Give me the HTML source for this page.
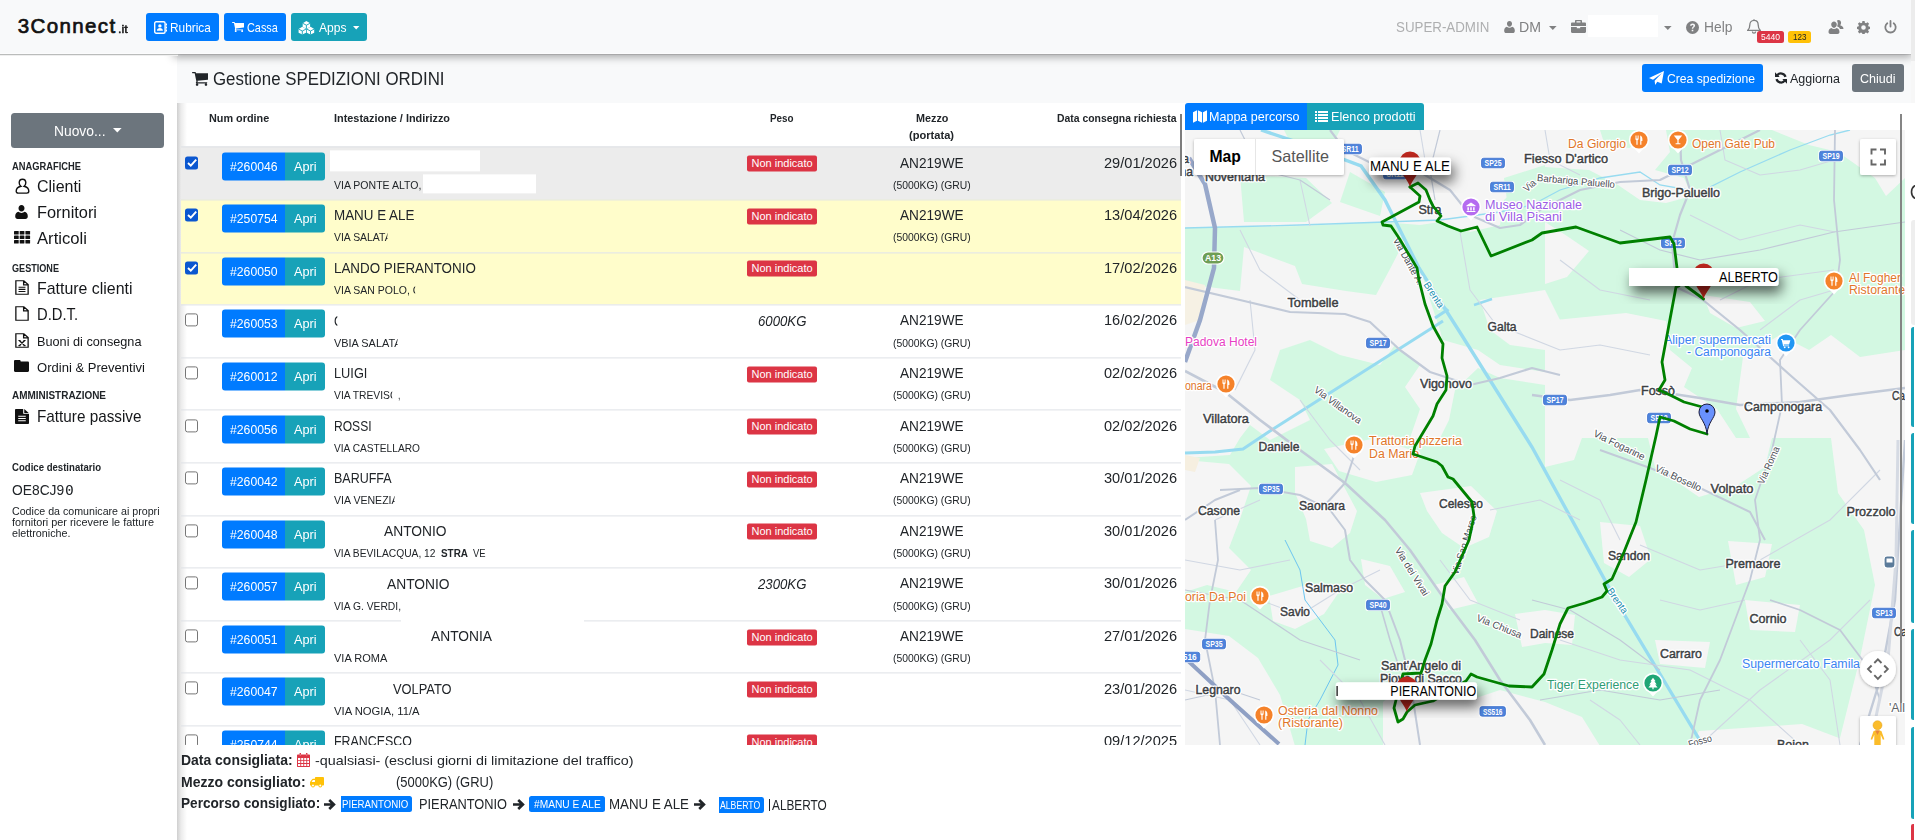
<!DOCTYPE html>
<html lang="it"><head><meta charset="utf-8"><title>3Connect.it - Gestione SPEDIZIONI ORDINI</title>
<style>
html,body{margin:0;padding:0;}
body{width:1915px;height:840px;overflow:hidden;position:relative;background:#fff;font-family:"Liberation Sans", sans-serif;color:#212529;}
body>div,body>svg,.t{position:absolute;}
.t{white-space:pre;line-height:1;transform-origin:0 50%;}
div{box-sizing:border-box;}
</style></head><body>
<div style="left:177px;top:54px;width:1734px;height:48.6px;background:#f8f9fa;"></div>
<div style="left:177px;top:102.6px;width:10px;height:738px;background:linear-gradient(to right,rgba(0,0,0,.19),rgba(0,0,0,.08) 40%,rgba(0,0,0,0));"></div>
<svg style="left:191.500px;top:72px" width="16.500" height="14" viewBox="64 256 1664 1408"><path fill="#212529" d="M704 1536q0 52-38 90t-90 38-90-38-38-90 38-90 90-38 90 38 38 90zm896 0q0 52-38 90t-90 38-90-38-38-90 38-90 90-38 90 38 38 90zm128-1088v512q0 24-16.500 42.500t-40.500 21.500l-1044 122q13 60 13 70 0 16-24 64h920q26 0 45 19t19 45-19 45-45 19h-1024q-26 0-45-19t-19-45q0-11 8-31.500t16-36 21.500-40 15.500-29.500l-177-823h-204q-26 0-45-19t-19-45 19-45 45-19h256q16 0 28.500 6.500t19.500 15.500 13 24.500 8 26 5.500 29.500 4.500 26h1201q26 0 45 19t19 45z"/></svg>
<span class="t" style="left:213.00px;top:69.81px;font-size:18px;transform:scaleX(0.9370);">Gestione SPEDIZIONI ORDINI</span>
<div style="left:1642px;top:64px;width:121px;height:28px;background:#007bff;border-radius:3px;"></div>
<svg style="left:1649px;top:71px" width="15" height="14" viewBox="0 0 15 14"><path fill="#fff" d="M15 0 12.700 12.600 8.300 10.800 6.200 14 5.600 9.800 13 2 4 8.700 0 7z"/></svg>
<span class="t" style="left:1666.50px;top:71.71px;font-size:13.5px;color:#fff;transform:scaleX(0.9020);">Crea spedizione</span>
<svg style="left:1775px;top:72px" width="12" height="12" viewBox="0 0 12 12"><path fill="none" stroke="#212529" stroke-width="2.300" d="M10.500 4.800A4.700 4.700 0 0 0 2.200 3.400M1.500 7.200A4.700 4.700 0 0 0 9.800 8.600"/><path fill="#212529" d="M0 .3v4.700h4.700zM12 11.700V7H7.300z"/></svg>
<span class="t" style="left:1789.50px;top:71.71px;font-size:13.5px;transform:scaleX(0.9251);">Aggiorna</span>
<div style="left:1852px;top:64px;width:52px;height:28px;background:#6c757d;border-radius:3px;"></div>
<span class="t" style="left:1860.00px;top:71.71px;font-size:13.5px;color:#fff;transform:scaleX(0.9273);">Chiudi</span>
<div style="left:11px;top:113px;width:153px;height:35px;background:#6c757d;border-radius:3.500px;"></div>
<span class="t" style="left:54.00px;top:124.17px;font-size:14.4px;color:#fff;transform:scaleX(0.9609);">Nuovo...</span>
<svg style="left:113px;top:128px" width="9" height="5" viewBox="0 0 9 5"><path fill="#fff" d="M0 0h8.600L4.300 4.600z"/></svg>
<span class="t" style="left:11.60px;top:161.52px;font-size:10.4px;font-weight:700;transform:scaleX(0.8987);">ANAGRAFICHE</span>
<span class="t" style="left:11.60px;top:263.52px;font-size:10.4px;font-weight:700;transform:scaleX(0.8752);">GESTIONE</span>
<span class="t" style="left:11.60px;top:391.32px;font-size:10.4px;font-weight:700;transform:scaleX(0.9578);">AMMINISTRAZIONE</span>
<span class="t" style="left:36.60px;top:178.49px;font-size:16.2px;color:#15171a;transform:scaleX(0.9870);">Clienti</span>
<span class="t" style="left:36.60px;top:204.39px;font-size:16.2px;color:#15171a;transform:scaleX(1.0105);">Fornitori</span>
<span class="t" style="left:36.60px;top:230.29px;font-size:16.2px;color:#15171a;transform:scaleX(1.0293);">Articoli</span>
<span class="t" style="left:36.60px;top:280.49px;font-size:16.2px;color:#15171a;transform:scaleX(0.9828);">Fatture clienti</span>
<span class="t" style="left:36.60px;top:306.49px;font-size:16.2px;color:#15171a;transform:scaleX(0.9117);">D.D.T.</span>
<span class="t" style="left:36.60px;top:408.19px;font-size:16.2px;color:#15171a;transform:scaleX(0.9442);">Fatture passive</span>
<span class="t" style="left:36.60px;top:336.14px;font-size:12.6px;color:#15171a;transform:scaleX(1.0083);">Buoni di consegna</span>
<span class="t" style="left:36.60px;top:362.14px;font-size:12.6px;color:#15171a;transform:scaleX(1.0355);">Ordini &amp; Preventivi</span>
<svg style="left:14.500px;top:178px" width="15" height="16" viewBox="0 0 15 16"><path fill="none" stroke="#111" stroke-width="1.400" d="M7.500 1.200c2 0 3.300 1.600 3.300 3.600 0 1.600-.8 2.800-1.700 3.500 2.600.6 4.700 2.400 4.700 5 0 1.200-.9 1.800-2 1.800H3.200c-1.100 0-2-.6-2-1.800 0-2.600 2.100-4.400 4.700-5-.9-.7-1.700-1.900-1.700-3.500 0-2 1.300-3.600 3.300-3.600z"/></svg>
<svg style="left:15px;top:205px" width="13" height="14" viewBox="0 0 13 14"><path fill="#111" d="M6.500 0c1.800 0 3 1.400 3 3.200S8.300 6.600 6.500 6.600s-3-1.600-3-3.400S4.700 0 6.500 0zM3.400 6.800c.8.700 1.900 1.100 3.100 1.100s2.300-.4 3.100-1.100c1.900.5 3.200 2 3.200 4.500 0 1.700-1 2.700-2.400 2.700H2.600C1.200 14 .2 13 .2 11.300c0-2.500 1.300-4 3.200-4.500z"/></svg>
<svg style="left:13.800px;top:231.200px" width="17" height="13" viewBox="0 0 17 13"><rect x="0.0" y="0.0" width="4.700" height="3.500" rx=".6" fill="#111"/><rect x="5.7" y="0.0" width="4.700" height="3.500" rx=".6" fill="#111"/><rect x="11.4" y="0.0" width="4.700" height="3.500" rx=".6" fill="#111"/><rect x="0.0" y="4.5" width="4.700" height="3.500" rx=".6" fill="#111"/><rect x="5.7" y="4.5" width="4.700" height="3.500" rx=".6" fill="#111"/><rect x="11.4" y="4.5" width="4.700" height="3.500" rx=".6" fill="#111"/><rect x="0.0" y="9.0" width="4.700" height="3.500" rx=".6" fill="#111"/><rect x="5.7" y="9.0" width="4.700" height="3.500" rx=".6" fill="#111"/><rect x="11.4" y="9.0" width="4.700" height="3.500" rx=".6" fill="#111"/></svg>
<svg style="left:14.8px;top:280.3px" width="14" height="15" viewBox="0 0 13 16" preserveAspectRatio="none"><path fill="none" stroke="#111" stroke-width="1.200" d="M.8.800h7.400l4 4v10.400H.8zM8 .8v4.400h4.200"/><path stroke="#111" stroke-width="1.100" d="M3.300 7.800h6.400M3.300 10h6.400M3.300 12.200h6.400"/></svg>
<svg style="left:14.8px;top:306.3px" width="14" height="15" viewBox="0 0 13 16" preserveAspectRatio="none"><path fill="none" stroke="#111" stroke-width="1.200" d="M.8.800h7.400l4 4v10.400H.8zM8 .8v4.400h4.200"/></svg>
<svg style="left:14.8px;top:333.3px" width="14" height="15" viewBox="0 0 13 16" preserveAspectRatio="none"><path fill="none" stroke="#111" stroke-width="1.200" d="M.8.800h7.400l4 4v10.400H.8zM8 .8v4.400h4.200"/><path stroke="#111" stroke-width="1.200" fill="none" d="M4 8l5 5.500M9 8l-5 5.500M3.200 8h2M7.800 8h2M3.200 13.500h2M7.800 13.500h2"/></svg>
<svg style="left:13.900px;top:359.800px" width="15" height="12" viewBox="0 0 16 13" preserveAspectRatio="none"><path fill="#111" d="M1.300 0h4.500c.7 0 1.300.6 1.300 1.300v.4h7.600c.7 0 1.300.6 1.300 1.300v8.700c0 .7-.6 1.300-1.300 1.300H1.300C.6 13 0 12.400 0 11.700V1.300C0 .6.600 0 1.300 0z"/></svg>
<svg style="left:14.800px;top:408.700px" width="14" height="15" viewBox="0 0 13 16" preserveAspectRatio="none"><path fill="#111" d="M0 .8C0 .4.400 0 .8 0h6.800v4.600c0 .5.400.800.800.800H13v9.800c0 .4-.4.800-.8.800H.8c-.4 0-.8-.4-.8-.8zM8.600 0l4.400 4.400H8.600zM3 7.200v1.100h7V7.200zM3 9.600v1.100h7V9.600zM3 12v1.100h7V12z" fill-rule="evenodd"/></svg>
<span class="t" style="left:11.60px;top:462.72px;font-size:10.4px;font-weight:700;transform:scaleX(0.9229);">Codice destinatario</span>
<span class="t" style="left:11.60px;top:483.07px;font-size:14.6px;transform:scaleX(0.9464);">OE8CJ9</span>
<span class="t" style="left:64.60px;top:482.73px;font-size:14.8px;font-family:'DejaVu Sans Mono', monospace;transform:scaleX(0.9863);">0</span>
<span class="t" style="left:11.60px;top:505.82px;font-size:10.6px;transform:scaleX(1.0060);">Codice da comunicare ai propri</span>
<span class="t" style="left:11.60px;top:517.02px;font-size:10.6px;transform:scaleX(1.0262);">fornitori per ricevere le fatture</span>
<span class="t" style="left:11.60px;top:528.22px;font-size:10.6px;transform:scaleX(1.0135);">elettroniche.</span>
<div style="left:181px;top:102.600px;width:1000px;height:642.600px;overflow:hidden">
<div style="position:absolute;left:0;top:0;width:1000px;height:700px;transform:translate(-181px,-102.600px)">
<span class="t" style="left:209.00px;top:113.17px;font-size:11.52px;font-weight:700;transform:scaleX(0.9409);">Num ordine</span>
<span class="t" style="left:333.60px;top:113.17px;font-size:11.52px;font-weight:700;transform:scaleX(0.9443);">Intestazione / Indirizzo</span>
<span class="t" style="left:770.40px;top:113.17px;font-size:11.52px;font-weight:700;transform:scaleX(0.8572);">Peso</span>
<span class="t" style="left:915.60px;top:113.17px;font-size:11.52px;font-weight:700;transform:scaleX(0.9374);">Mezzo</span>
<span class="t" style="left:909.00px;top:130.37px;font-size:11.52px;font-weight:700;transform:scaleX(0.9635);">(portata)</span>
<span class="t" style="left:1057.40px;top:113.17px;font-size:11.52px;font-weight:700;transform:scaleX(0.9027);">Data consegna richiesta</span>
<div style="position:absolute;left:181px;top:146px;width:1000px;height:53px;background:#ececec;"></div>
<div style="position:absolute;left:181px;top:146px;width:1000px;height:1px;background:#dee2e6;"></div>
<div style="position:absolute;left:185px;top:156px;width:13px;height:13px;background:#0b57d0;border-radius:2.500px;"></div>
<svg style="position:absolute;left:186.500px;top:158.00px" width="10" height="9" viewBox="0 0 10 9"><path fill="none" stroke="#fff" stroke-width="1.900" d="M1 4.600 3.800 7.300 9.200 1.200"/></svg>
<div style="position:absolute;left:222px;top:152px;width:63px;height:28px;background:#007bff;border-radius:3px 0 0 3px;"></div>
<div style="position:absolute;left:285px;top:152px;width:40px;height:28px;background:#17a2b8;border-radius:0 3px 3px 0;"></div>
<span class="t" style="left:230.40px;top:160.25px;font-size:13px;color:#fff;transform:scaleX(0.9402);">#260046</span>
<span class="t" style="left:294.00px;top:160.25px;font-size:13px;color:#fff;transform:scaleX(0.9773);">Apri</span>
<span class="t" style="left:333.60px;top:180.27px;font-size:11.52px;transform:scaleX(0.9144);">VIA PONTE ALTO,</span>
<div style="position:absolute;left:747px;top:155px;width:70px;height:16px;background:#dc3545;border-radius:2px;"></div>
<span class="t" style="left:751.50px;top:158.23px;font-size:11px;color:#fff;">Non indicato</span>
<span class="t" style="left:900.00px;top:155.97px;font-size:14.4px;transform:scaleX(0.9466);">AN219WE</span>
<span class="t" style="left:892.60px;top:180.17px;font-size:11.52px;transform:scaleX(0.9006);">(5000KG) (GRU)</span>
<span class="t" style="left:1104.00px;top:155.97px;font-size:14.4px;transform:scaleX(1.0134);">29/01/2026</span>
<div style="position:absolute;left:181px;top:199px;width:1000px;height:53px;background:#fffdcb;"></div>
<div style="position:absolute;left:181px;top:199px;width:1000px;height:1px;background:#dee2e6;"></div>
<div style="position:absolute;left:185px;top:208px;width:13px;height:13px;background:#0b57d0;border-radius:2.500px;"></div>
<svg style="position:absolute;left:186.500px;top:210.00px" width="10" height="9" viewBox="0 0 10 9"><path fill="none" stroke="#fff" stroke-width="1.900" d="M1 4.600 3.800 7.300 9.200 1.200"/></svg>
<div style="position:absolute;left:222px;top:204px;width:63px;height:28px;background:#007bff;border-radius:3px 0 0 3px;"></div>
<div style="position:absolute;left:285px;top:204px;width:40px;height:28px;background:#17a2b8;border-radius:0 3px 3px 0;"></div>
<span class="t" style="left:230.40px;top:212.25px;font-size:13px;color:#fff;transform:scaleX(0.9402);">#250754</span>
<span class="t" style="left:294.00px;top:212.25px;font-size:13px;color:#fff;transform:scaleX(0.9773);">Apri</span>
<span class="t" style="left:333.60px;top:208.87px;font-size:14.4px;transform:scaleX(0.9308);">MANU E ALE</span>
<span class="t" style="left:333.60px;top:232.87px;font-size:11.52px;transform:scaleX(0.9060);overflow:hidden;width:58.72px;">VIA SALATA</span>
<div style="position:absolute;left:747px;top:208px;width:70px;height:16px;background:#dc3545;border-radius:2px;"></div>
<span class="t" style="left:751.50px;top:211.23px;font-size:11px;color:#fff;">Non indicato</span>
<span class="t" style="left:900.00px;top:208.57px;font-size:14.4px;transform:scaleX(0.9466);">AN219WE</span>
<span class="t" style="left:892.60px;top:232.77px;font-size:11.52px;transform:scaleX(0.9006);">(5000KG) (GRU)</span>
<span class="t" style="left:1104.00px;top:208.57px;font-size:14.4px;transform:scaleX(1.0134);">13/04/2026</span>
<div style="position:absolute;left:181px;top:252px;width:1000px;height:52px;background:#fffdcb;"></div>
<div style="position:absolute;left:181px;top:252px;width:1000px;height:1px;background:#dee2e6;"></div>
<div style="position:absolute;left:185px;top:261px;width:13px;height:13px;background:#0b57d0;border-radius:2.500px;"></div>
<svg style="position:absolute;left:186.500px;top:263.00px" width="10" height="9" viewBox="0 0 10 9"><path fill="none" stroke="#fff" stroke-width="1.900" d="M1 4.600 3.800 7.300 9.200 1.200"/></svg>
<div style="position:absolute;left:222px;top:257px;width:63px;height:28px;background:#007bff;border-radius:3px 0 0 3px;"></div>
<div style="position:absolute;left:285px;top:257px;width:40px;height:28px;background:#17a2b8;border-radius:0 3px 3px 0;"></div>
<span class="t" style="left:230.40px;top:265.25px;font-size:13px;color:#fff;transform:scaleX(0.9402);">#260050</span>
<span class="t" style="left:294.00px;top:265.25px;font-size:13px;color:#fff;transform:scaleX(0.9773);">Apri</span>
<span class="t" style="left:333.60px;top:261.47px;font-size:14.4px;transform:scaleX(0.9300);">LANDO PIERANTONIO</span>
<span class="t" style="left:333.60px;top:285.47px;font-size:11.52px;transform:scaleX(0.9122);overflow:hidden;width:88.80px;">VIA SAN POLO, C</span>
<div style="position:absolute;left:747px;top:260px;width:70px;height:16px;background:#dc3545;border-radius:2px;"></div>
<span class="t" style="left:751.50px;top:263.23px;font-size:11px;color:#fff;">Non indicato</span>
<span class="t" style="left:1104.00px;top:261.17px;font-size:14.4px;transform:scaleX(1.0134);">17/02/2026</span>
<div style="position:absolute;left:181px;top:304px;width:1000px;height:1px;background:#dee2e6;"></div>
<div style="position:absolute;left:185px;top:313px;width:13px;height:13px;background:#fff;border:1px solid #767676;border-radius:2.500px;"></div>
<div style="position:absolute;left:222px;top:309px;width:63px;height:28px;background:#007bff;border-radius:3px 0 0 3px;"></div>
<div style="position:absolute;left:285px;top:309px;width:40px;height:28px;background:#17a2b8;border-radius:0 3px 3px 0;"></div>
<span class="t" style="left:230.40px;top:317.25px;font-size:13px;color:#fff;transform:scaleX(0.9402);">#260053</span>
<span class="t" style="left:294.00px;top:317.25px;font-size:13px;color:#fff;transform:scaleX(0.9773);">Apri</span>
<span class="t" style="left:333.60px;top:314.07px;font-size:14.4px;transform:scaleX(0.8264);overflow:hidden;width:4.11px;">C</span>
<span class="t" style="left:333.60px;top:338.07px;font-size:11.52px;transform:scaleX(0.9486);overflow:hidden;width:67.05px;">VBIA SALATA</span>
<span class="t" style="left:757.80px;top:313.97px;font-size:14.4px;font-style:italic;transform:scaleX(0.9164);">6000KG</span>
<span class="t" style="left:900.00px;top:313.77px;font-size:14.4px;transform:scaleX(0.9466);">AN219WE</span>
<span class="t" style="left:892.60px;top:337.97px;font-size:11.52px;transform:scaleX(0.9006);">(5000KG) (GRU)</span>
<span class="t" style="left:1104.00px;top:313.77px;font-size:14.4px;transform:scaleX(1.0134);">16/02/2026</span>
<div style="position:absolute;left:181px;top:357px;width:1000px;height:1px;background:#dee2e6;"></div>
<div style="position:absolute;left:185px;top:366px;width:13px;height:13px;background:#fff;border:1px solid #767676;border-radius:2.500px;"></div>
<div style="position:absolute;left:222px;top:362px;width:63px;height:28px;background:#007bff;border-radius:3px 0 0 3px;"></div>
<div style="position:absolute;left:285px;top:362px;width:40px;height:28px;background:#17a2b8;border-radius:0 3px 3px 0;"></div>
<span class="t" style="left:230.40px;top:370.25px;font-size:13px;color:#fff;transform:scaleX(0.9402);">#260012</span>
<span class="t" style="left:294.00px;top:370.25px;font-size:13px;color:#fff;transform:scaleX(0.9773);">Apri</span>
<span class="t" style="left:333.60px;top:366.67px;font-size:14.4px;transform:scaleX(0.8884);">LUIGI</span>
<span class="t" style="left:333.60px;top:390.67px;font-size:11.52px;transform:scaleX(0.8955);overflow:hidden;width:64.77px;">VIA TREVISO</span>
<span class="t" style="left:397.60px;top:390.67px;font-size:11.52px;transform:scaleX(0.7493);">,</span>
<div style="position:absolute;left:747px;top:366px;width:70px;height:16px;background:#dc3545;border-radius:2px;"></div>
<span class="t" style="left:751.50px;top:369.23px;font-size:11px;color:#fff;">Non indicato</span>
<span class="t" style="left:900.00px;top:366.37px;font-size:14.4px;transform:scaleX(0.9466);">AN219WE</span>
<span class="t" style="left:892.60px;top:390.57px;font-size:11.52px;transform:scaleX(0.9006);">(5000KG) (GRU)</span>
<span class="t" style="left:1104.00px;top:366.37px;font-size:14.4px;transform:scaleX(1.0134);">02/02/2026</span>
<div style="position:absolute;left:181px;top:409px;width:1000px;height:1px;background:#dee2e6;"></div>
<div style="position:absolute;left:185px;top:419px;width:13px;height:13px;background:#fff;border:1px solid #767676;border-radius:2.500px;"></div>
<div style="position:absolute;left:222px;top:415px;width:63px;height:28px;background:#007bff;border-radius:3px 0 0 3px;"></div>
<div style="position:absolute;left:285px;top:415px;width:40px;height:28px;background:#17a2b8;border-radius:0 3px 3px 0;"></div>
<span class="t" style="left:230.40px;top:423.25px;font-size:13px;color:#fff;transform:scaleX(0.9402);">#260056</span>
<span class="t" style="left:294.00px;top:423.25px;font-size:13px;color:#fff;transform:scaleX(0.9773);">Apri</span>
<span class="t" style="left:333.60px;top:419.27px;font-size:14.4px;transform:scaleX(0.8396);">ROSSI</span>
<span class="t" style="left:333.60px;top:443.27px;font-size:11.52px;transform:scaleX(0.8840);">VIA CASTELLARO</span>
<div style="position:absolute;left:747px;top:418px;width:70px;height:16px;background:#dc3545;border-radius:2px;"></div>
<span class="t" style="left:751.50px;top:421.23px;font-size:11px;color:#fff;">Non indicato</span>
<span class="t" style="left:900.00px;top:418.97px;font-size:14.4px;transform:scaleX(0.9466);">AN219WE</span>
<span class="t" style="left:892.60px;top:443.17px;font-size:11.52px;transform:scaleX(0.9006);">(5000KG) (GRU)</span>
<span class="t" style="left:1104.00px;top:418.97px;font-size:14.4px;transform:scaleX(1.0134);">02/02/2026</span>
<div style="position:absolute;left:181px;top:462px;width:1000px;height:1px;background:#dee2e6;"></div>
<div style="position:absolute;left:185px;top:471px;width:13px;height:13px;background:#fff;border:1px solid #767676;border-radius:2.500px;"></div>
<div style="position:absolute;left:222px;top:467px;width:63px;height:28px;background:#007bff;border-radius:3px 0 0 3px;"></div>
<div style="position:absolute;left:285px;top:467px;width:40px;height:28px;background:#17a2b8;border-radius:0 3px 3px 0;"></div>
<span class="t" style="left:230.40px;top:475.25px;font-size:13px;color:#fff;transform:scaleX(0.9402);">#260042</span>
<span class="t" style="left:294.00px;top:475.25px;font-size:13px;color:#fff;transform:scaleX(0.9773);">Apri</span>
<span class="t" style="left:333.60px;top:471.87px;font-size:14.4px;transform:scaleX(0.8678);">BARUFFA</span>
<span class="t" style="left:333.60px;top:495.87px;font-size:11.52px;transform:scaleX(0.9175);overflow:hidden;width:65.72px;">VIA VENEZIA</span>
<div style="position:absolute;left:747px;top:471px;width:70px;height:16px;background:#dc3545;border-radius:2px;"></div>
<span class="t" style="left:751.50px;top:474.23px;font-size:11px;color:#fff;">Non indicato</span>
<span class="t" style="left:900.00px;top:471.57px;font-size:14.4px;transform:scaleX(0.9466);">AN219WE</span>
<span class="t" style="left:892.60px;top:495.77px;font-size:11.52px;transform:scaleX(0.9006);">(5000KG) (GRU)</span>
<span class="t" style="left:1104.00px;top:471.57px;font-size:14.4px;transform:scaleX(1.0134);">30/01/2026</span>
<div style="position:absolute;left:181px;top:515px;width:1000px;height:1px;background:#dee2e6;"></div>
<div style="position:absolute;left:185px;top:524px;width:13px;height:13px;background:#fff;border:1px solid #767676;border-radius:2.500px;"></div>
<div style="position:absolute;left:222px;top:520px;width:63px;height:28px;background:#007bff;border-radius:3px 0 0 3px;"></div>
<div style="position:absolute;left:285px;top:520px;width:40px;height:28px;background:#17a2b8;border-radius:0 3px 3px 0;"></div>
<span class="t" style="left:230.40px;top:528.25px;font-size:13px;color:#fff;transform:scaleX(0.9402);">#260048</span>
<span class="t" style="left:294.00px;top:528.25px;font-size:13px;color:#fff;transform:scaleX(0.9773);">Apri</span>
<span class="t" style="left:383.60px;top:524.47px;font-size:14.4px;transform:scaleX(0.9585);">ANTONIO</span>
<span class="t" style="left:333.60px;top:548.47px;font-size:11.52px;transform:scaleX(0.8912);">VIA BEVILACQUA, 12 </span>
<span class="t" style="left:441.40px;top:548.47px;font-size:11.52px;font-weight:700;transform:scaleX(0.8610);">STRA</span>
<span class="t" style="left:472.60px;top:548.47px;font-size:11.52px;transform:scaleX(0.8195);">VE</span>
<div style="position:absolute;left:747px;top:523px;width:70px;height:16px;background:#dc3545;border-radius:2px;"></div>
<span class="t" style="left:751.50px;top:526.23px;font-size:11px;color:#fff;">Non indicato</span>
<span class="t" style="left:900.00px;top:524.17px;font-size:14.4px;transform:scaleX(0.9466);">AN219WE</span>
<span class="t" style="left:892.60px;top:548.37px;font-size:11.52px;transform:scaleX(0.9006);">(5000KG) (GRU)</span>
<span class="t" style="left:1104.00px;top:524.17px;font-size:14.4px;transform:scaleX(1.0134);">30/01/2026</span>
<div style="position:absolute;left:181px;top:567px;width:1000px;height:1px;background:#dee2e6;"></div>
<div style="position:absolute;left:185px;top:576px;width:13px;height:13px;background:#fff;border:1px solid #767676;border-radius:2.500px;"></div>
<div style="position:absolute;left:222px;top:572px;width:63px;height:28px;background:#007bff;border-radius:3px 0 0 3px;"></div>
<div style="position:absolute;left:285px;top:572px;width:40px;height:28px;background:#17a2b8;border-radius:0 3px 3px 0;"></div>
<span class="t" style="left:230.40px;top:580.25px;font-size:13px;color:#fff;transform:scaleX(0.9402);">#260057</span>
<span class="t" style="left:294.00px;top:580.25px;font-size:13px;color:#fff;transform:scaleX(0.9773);">Apri</span>
<span class="t" style="left:386.60px;top:577.07px;font-size:14.4px;transform:scaleX(0.9585);">ANTONIO</span>
<span class="t" style="left:333.60px;top:601.07px;font-size:11.52px;transform:scaleX(0.8948);">VIA G. VERDI,</span>
<span class="t" style="left:757.80px;top:576.97px;font-size:14.4px;font-style:italic;transform:scaleX(0.9164);">2300KG</span>
<span class="t" style="left:900.00px;top:576.77px;font-size:14.4px;transform:scaleX(0.9466);">AN219WE</span>
<span class="t" style="left:892.60px;top:600.97px;font-size:11.52px;transform:scaleX(0.9006);">(5000KG) (GRU)</span>
<span class="t" style="left:1104.00px;top:576.77px;font-size:14.4px;transform:scaleX(1.0134);">30/01/2026</span>
<div style="position:absolute;left:181px;top:620px;width:1000px;height:1px;background:#dee2e6;"></div>
<div style="position:absolute;left:185px;top:629px;width:13px;height:13px;background:#fff;border:1px solid #767676;border-radius:2.500px;"></div>
<div style="position:absolute;left:222px;top:625px;width:63px;height:28px;background:#007bff;border-radius:3px 0 0 3px;"></div>
<div style="position:absolute;left:285px;top:625px;width:40px;height:28px;background:#17a2b8;border-radius:0 3px 3px 0;"></div>
<span class="t" style="left:230.40px;top:633.25px;font-size:13px;color:#fff;transform:scaleX(0.9402);">#260051</span>
<span class="t" style="left:294.00px;top:633.25px;font-size:13px;color:#fff;transform:scaleX(0.9773);">Apri</span>
<span class="t" style="left:431.00px;top:629.67px;font-size:14.4px;transform:scaleX(0.9573);">ANTONIA</span>
<span class="t" style="left:333.60px;top:653.67px;font-size:11.52px;transform:scaleX(0.9592);">VIA ROMA</span>
<div style="position:absolute;left:747px;top:629px;width:70px;height:16px;background:#dc3545;border-radius:2px;"></div>
<span class="t" style="left:751.50px;top:632.23px;font-size:11px;color:#fff;">Non indicato</span>
<span class="t" style="left:900.00px;top:629.37px;font-size:14.4px;transform:scaleX(0.9466);">AN219WE</span>
<span class="t" style="left:892.60px;top:653.57px;font-size:11.52px;transform:scaleX(0.9006);">(5000KG) (GRU)</span>
<span class="t" style="left:1104.00px;top:629.37px;font-size:14.4px;transform:scaleX(1.0134);">27/01/2026</span>
<div style="position:absolute;left:181px;top:672px;width:1000px;height:1px;background:#dee2e6;"></div>
<div style="position:absolute;left:185px;top:681px;width:13px;height:13px;background:#fff;border:1px solid #767676;border-radius:2.500px;"></div>
<div style="position:absolute;left:222px;top:677px;width:63px;height:28px;background:#007bff;border-radius:3px 0 0 3px;"></div>
<div style="position:absolute;left:285px;top:677px;width:40px;height:28px;background:#17a2b8;border-radius:0 3px 3px 0;"></div>
<span class="t" style="left:230.40px;top:685.25px;font-size:13px;color:#fff;transform:scaleX(0.9402);">#260047</span>
<span class="t" style="left:294.00px;top:685.25px;font-size:13px;color:#fff;transform:scaleX(0.9773);">Apri</span>
<span class="t" style="left:392.60px;top:682.27px;font-size:14.4px;transform:scaleX(0.8934);">VOLPATO</span>
<span class="t" style="left:333.60px;top:706.27px;font-size:11.52px;transform:scaleX(0.9785);">VIA NOGIA, 11/A</span>
<div style="position:absolute;left:747px;top:681px;width:70px;height:16px;background:#dc3545;border-radius:2px;"></div>
<span class="t" style="left:751.50px;top:684.23px;font-size:11px;color:#fff;">Non indicato</span>
<span class="t" style="left:1104.00px;top:681.97px;font-size:14.4px;transform:scaleX(1.0134);">23/01/2026</span>
<div style="position:absolute;left:181px;top:725px;width:1000px;height:1px;background:#dee2e6;"></div>
<div style="position:absolute;left:185px;top:734px;width:13px;height:13px;background:#fff;border:1px solid #767676;border-radius:2.500px;"></div>
<div style="position:absolute;left:222px;top:730px;width:63px;height:28px;background:#007bff;border-radius:3px 0 0 3px;"></div>
<div style="position:absolute;left:285px;top:730px;width:40px;height:28px;background:#17a2b8;border-radius:0 3px 3px 0;"></div>
<span class="t" style="left:230.40px;top:738.25px;font-size:13px;color:#fff;transform:scaleX(0.9402);">#250744</span>
<span class="t" style="left:294.00px;top:738.25px;font-size:13px;color:#fff;transform:scaleX(0.9773);">Apri</span>
<span class="t" style="left:333.60px;top:734.87px;font-size:14.4px;transform:scaleX(0.8610);">FRANCESCO</span>
<div style="position:absolute;left:747px;top:734px;width:70px;height:16px;background:#dc3545;border-radius:2px;"></div>
<span class="t" style="left:751.50px;top:737.23px;font-size:11px;color:#fff;">Non indicato</span>
<span class="t" style="left:1104.00px;top:734.57px;font-size:14.4px;transform:scaleX(1.0134);">09/12/2025</span>
<div style="position:absolute;left:330px;top:150px;width:150px;height:21.6px;background:#fff;"></div>
<div style="position:absolute;left:423px;top:174px;width:113px;height:19.6px;background:#fff;"></div>
<div style="position:absolute;left:401px;top:617px;width:183px;height:5px;background:#fff;"></div>
</div></div>
<div style="left:1180px;top:114px;width:1.6px;height:62px;background:#7d7d7d;"></div>
<span class="t" style="left:181.00px;top:753.86px;font-size:13.8px;font-weight:700;transform:scaleX(1.0108);">Data consigliata:</span>
<svg style="left:297px;top:753px" width="13" height="14" viewBox="0 0 13 14"><path fill="#dc3545" d="M2.600 0h1.400v1.500h5V0h1.400v1.500H12c.6 0 1 .4 1 1V13c0 .6-.4 1-1 1H1c-.6 0-1-.4-1-1V2.500c0-.6.4-1 1-1h1.600zM1 5v2.200h2.300V5zm3.200 0v2.200h2.100V5zm3 0v2.200h2.100V5zm3 0v2.200H12V5zM1 8v2.100h2.300V8zm3.200 0v2.100h2.100V8zm3 0v2.100h2.100V8zm3 0v2.100H12V8zM1 10.900V13h2.300v-2.100zm3.200 0V13h2.100v-2.100zm3 0V13h2.100v-2.100zm3 0V13H12v-2.100z"/><path stroke="#fff" stroke-width=".5" d="M3.300 1v2M9.700 1v2" opacity=".6"/></svg>
<span class="t" style="left:315.00px;top:754.36px;font-size:13.6px;transform:scaleX(1.0548);">-qualsiasi- (esclusi giorni di limitazione del traffico)</span>
<span class="t" style="left:181.00px;top:775.66px;font-size:13.8px;font-weight:700;transform:scaleX(1.0158);">Mezzo consigliato:</span>
<svg style="left:310px;top:777px;transform:scaleX(-1)" width="14" height="11" viewBox="0 0 15 12" preserveAspectRatio="none"><path fill="#ffc107" d="M0 1.200C0 .5.500 0 1.200 0h7.600c.5 0 .9.400.9.900V2h2.100c.4 0 .7.200.9.500L14.600 5c.2.300.4.700.4 1.100v2.600c0 .4-.3.700-.7.700h-.5a2 2 0 0 1-4 0H6a2 2 0 0 1-4 0h-.8C.5 9.400 0 8.900 0 8.200zM4 8.100a1.100 1.100 0 1 0 0 2.200 1.100 1.100 0 0 0 0-2.200zm7.800 0a1.100 1.100 0 1 0 0 2.200 1.100 1.100 0 0 0 0-2.200zM9.700 3.200v2.300h3.600l-1.200-2c-.1-.2-.3-.3-.5-.3z"/></svg>
<span class="t" style="left:396.40px;top:775.37px;font-size:14.4px;transform:scaleX(0.9004);">(5000KG) (GRU)</span>
<span class="t" style="left:181.00px;top:797.26px;font-size:13.8px;font-weight:700;transform:scaleX(0.9867);">Percorso consigliato:</span>
<svg style="left:324px;top:798.500px" width="12" height="11" viewBox="0 0 12 11"><path fill="#212529" d="M0 4.200h6.600L4.300 1.900 6.100 0l5.700 5.500L6.100 11 4.300 9.100l2.300-2.300H0z"/></svg>
<div style="left:341px;top:796px;width:71px;height:16px;background:#007bff;border-radius:0 2.500px 2.500px 0;"></div>
<span class="t" style="left:341.60px;top:798.72px;font-size:10.8px;color:#fff;transform:scaleX(0.8948);">PIERANTONIO</span>
<span class="t" style="left:419.00px;top:796.97px;font-size:14.4px;transform:scaleX(0.8899);">PIERANTONIO</span>
<svg style="left:513px;top:798.500px" width="12" height="11" viewBox="0 0 12 11"><path fill="#212529" d="M0 4.200h6.600L4.300 1.900 6.100 0l5.700 5.500L6.100 11 4.300 9.100l2.300-2.300H0z"/></svg>
<div style="left:529px;top:796px;width:76px;height:15.6px;background:#007bff;border-radius:2.500px;"></div>
<span class="t" style="left:533.60px;top:798.52px;font-size:10.8px;color:#fff;transform:scaleX(0.9433);">#MANU E ALE</span>
<span class="t" style="left:609.00px;top:796.57px;font-size:14.4px;transform:scaleX(0.9262);">MANU E ALE</span>
<svg style="left:693.5px;top:798.500px" width="12" height="11" viewBox="0 0 12 11"><path fill="#212529" d="M0 4.200h6.600L4.300 1.900 6.100 0l5.700 5.500L6.100 11 4.300 9.100l2.300-2.300H0z"/></svg>
<div style="left:719px;top:797px;width:45px;height:16px;background:#007bff;border-radius:0 2.500px 2.500px 0;"></div>
<span class="t" style="left:719.80px;top:799.72px;font-size:10.8px;color:#fff;transform:scaleX(0.8037);">ALBERTO</span>
<div style="left:769.4px;top:799px;width:1px;height:12px;background:#212529;"></div>
<span class="t" style="left:771.60px;top:797.97px;font-size:14.4px;transform:scaleX(0.8221);">ALBERTO</span>
<div style="left:1185px;top:103px;width:122px;height:27px;background:#007bff;border-radius:3px 0 0 0;"></div>
<div style="left:1307px;top:103px;width:117px;height:27px;background:#17a2b8;border-radius:0 3px 0 0;"></div>
<svg style="left:1193px;top:109.500px" width="14" height="13" viewBox="0 0 14 13"><path fill="#fff" d="M0 2.200 4 .3v10.500l-4 1.900zM4.900.3l4.200 1.900v10.500l-4.200-1.900zM10 2.200 14 .3v10.500l-4 1.900z"/></svg>
<span class="t" style="left:1209.40px;top:109.61px;font-size:13.5px;color:#fff;transform:scaleX(0.9286);">Mappa percorso</span>
<svg style="left:1315px;top:110.500px" width="13" height="11" viewBox="0 0 13 11"><path fill="#fff" d="M0 0h2v2H0zM3 0h10v2H3zM0 3h2v2H0zM3 3h10v2H3zM0 6h2v2H0zM3 6h10v2H3zM0 9h2v2H0zM3 9h10v2H3z"/></svg>
<span class="t" style="left:1331.00px;top:109.61px;font-size:13.5px;color:#fff;transform:scaleX(0.9393);">Elenco prodotti</span>
<svg style="left:1185px;top:130px" width="720" height="615" viewBox="1185 130 720 615" font-family="'Liberation Sans', sans-serif"><rect x="1185" y="130" width="720" height="615" fill="#d3f8e2"/><polygon points="1185,130 1545,130 1545,178 1520,185 1504,200 1500,225 1470,232 1440,222 1420,225 1383,222 1300,226 1185,228" fill="#f5f5f5"/><polygon points="1185,284 1240,291 1244,247 1295,266 1302,284 1346,291 1376,295 1390,269 1405,240 1420,268 1430,300 1440,330 1443,344 1420,350 1395,345 1380,365 1340,355 1310,340 1280,350 1270,380 1300,400 1310,420 1270,440 1250,425 1240,438 1230,455 1185,458" fill="#f5f5f5"/><polygon points="1395,345 1443,340 1478,350 1500,365 1545,372 1545,385 1500,378 1478,368 1455,390 1449,420 1440,438 1410,438 1420,409 1405,387 1420,365" fill="#f5f5f5"/><polygon points="1480,300 1545,290 1560,320 1545,350 1510,345 1490,330" fill="#f5f5f5"/><polygon points="1545,130 1666,130 1670,152 1655,170 1684,178 1692,196 1666,203 1640,200 1618,185 1589,170 1545,167" fill="#f5f5f5"/><polygon points="1772,130 1905,130 1905,178 1886,196 1875,178 1838,152 1809,145" fill="#f5f5f5"/><polygon points="1545,222 1567,236 1589,251 1567,277 1545,284" fill="#f5f5f5"/><polygon points="1545,321 1626,313 1666,321 1670,350 1692,368 1684,387 1717,409 1736,438 1772,438 1765,467 1736,486 1699,497 1655,467 1648,438 1582,438 1574,460 1545,467" fill="#f5f5f5"/><polygon points="1743,357 1780,335 1809,350 1831,335 1860,357 1905,350 1905,438 1831,438 1750,438 1736,409" fill="#f5f5f5"/><polygon points="1703,295 1750,302 1765,321 1736,328 1710,313" fill="#f5f5f5"/><polygon points="1295,467 1332,464 1357,511 1350,533 1332,548 1310,541 1306,519 1295,493" fill="#f5f5f5"/><polygon points="1185,460 1229,464 1251,486 1240,519 1229,548 1251,570 1236,592 1207,585 1185,592" fill="#f5f5f5"/><polygon points="1185,629 1229,636 1258,658 1280,695 1295,746 1185,746" fill="#f5f5f5"/><polygon points="1269,596 1306,585 1339,592 1324,614 1295,629 1273,621" fill="#f5f5f5"/><polygon points="1420,493 1471,486 1497,511 1489,537 1464,548 1442,533 1427,511" fill="#f5f5f5"/><polygon points="1324,449 1376,438 1420,453 1412,475 1376,482 1339,471" fill="#f5f5f5"/><polygon points="1383,702 1400,688 1420,692 1440,684 1470,700 1500,690 1545,702 1582,717 1600,746 1383,746" fill="#f5f5f5"/><polygon points="1515,614 1545,610 1575,615 1572,645 1545,643 1522,647" fill="#f5f5f5"/><polygon points="1361,559 1390,566 1405,592 1383,599 1365,585" fill="#f5f5f5"/><polygon points="1434,585 1464,577 1478,603 1449,610" fill="#f5f5f5"/><polygon points="1831,438 1905,438 1905,746 1838,746 1860,658 1875,585 1864,530 1838,493" fill="#f5f5f5"/><polygon points="1600,522 1640,526 1651,559 1629,577 1604,563" fill="#f5f5f5"/><polygon points="1728,541 1772,544 1765,577 1736,585" fill="#f5f5f5"/><polygon points="1699,731 1802,724 1860,746 1692,746" fill="#f5f5f5"/><polygon points="1745,600 1800,605 1795,632 1750,630" fill="#f5f5f5"/><polygon points="1655,640 1710,642 1705,668 1660,664" fill="#f5f5f5"/><polygon points="1240,175 1306,178 1332,203 1306,222 1244,222" fill="#d3f8e2"/><polygon points="1284,130 1340,130 1330,150 1295,152" fill="#d3f8e2"/><polygon points="1350,172 1385,192 1380,216 1340,202" fill="#d3f8e2"/><polygon points="1504,178 1545,165 1545,222 1510,222" fill="#d3f8e2"/><polygon points="1600,130 1640,130 1630,148 1605,146" fill="#d3f8e2"/><polygon points="1185,280 1205,285 1200,320 1185,325" fill="#f6f1e4"/><polygon points="1185,455 1200,458 1195,472 1185,470" fill="#f6efe0"/><polyline points="1261,130 1300,143 1361,166 1385,200 1399,228 1419,268 1461,334 1532,447 1618,604 1702,744" fill="none" stroke="#97dbf0" stroke-width="3.400"/><polyline points="1185,228 1300,225 1385,222 1440,220 1500,212 1532,205 1560,190 1600,178 1640,172 1660,185 1700,192 1740,172 1790,150 1830,135 1850,130" fill="none" stroke="#97dbf0" stroke-width="1.300"/><polyline points="1185,453 1215,452 1243,449 1270,431 1443,321" fill="none" stroke="#97dbf0" stroke-width="3"/><polyline points="1435,318 1447,310 1441,305" fill="none" stroke="#97dbf0" stroke-width="3"/><polyline points="1474,305 1492,299" fill="none" stroke="#97dbf0" stroke-width="2.500"/><polyline points="1285,540 1300,570 1305,600 1335,640 1338,665 1320,700 1308,720 1305,745" fill="none" stroke="#6cc5f0" stroke-width="1"/><polyline points="1700,745 1760,690 1830,640 1870,600" fill="none" stroke="#d0d7e3" stroke-width="1.100" stroke-linejoin="round"/><polyline points="1640,545 1700,570 1760,560 1830,520 1880,470" fill="none" stroke="#d0d7e3" stroke-width="1.100" stroke-linejoin="round"/><polyline points="1560,640 1620,660 1690,670 1750,700 1800,745" fill="none" stroke="#d0d7e3" stroke-width="1.100" stroke-linejoin="round"/><polyline points="1490,510 1540,500 1580,520" fill="none" stroke="#d0d7e3" stroke-width="1.100" stroke-linejoin="round"/><polyline points="1260,600 1300,615 1340,590 1380,570" fill="none" stroke="#d0d7e3" stroke-width="1.100" stroke-linejoin="round"/><polyline points="1185,690 1230,700 1260,745" fill="none" stroke="#d0d7e3" stroke-width="1.100" stroke-linejoin="round"/><polyline points="1215,520 1260,500" fill="none" stroke="#d0d7e3" stroke-width="1.100" stroke-linejoin="round"/><polyline points="1510,330 1560,350 1600,345 1650,355" fill="none" stroke="#d0d7e3" stroke-width="1.100" stroke-linejoin="round"/><polyline points="1690,215 1740,240 1800,225 1835,232" fill="none" stroke="#d0d7e3" stroke-width="1.100" stroke-linejoin="round"/><polyline points="1240,230 1260,270 1300,300" fill="none" stroke="#d0d7e3" stroke-width="1.100" stroke-linejoin="round"/><polyline points="1300,180 1310,226" fill="none" stroke="#d0d7e3" stroke-width="1.100" stroke-linejoin="round"/><polyline points="1460,232 1470,290 1500,330" fill="none" stroke="#d0d7e3" stroke-width="1.100" stroke-linejoin="round"/><polyline points="1560,260 1600,290 1650,300" fill="none" stroke="#d0d7e3" stroke-width="1.100" stroke-linejoin="round"/><polyline points="1720,300 1760,280 1834,270" fill="none" stroke="#d0d7e3" stroke-width="1.100" stroke-linejoin="round"/><polyline points="1760,330 1800,300 1834,290" fill="none" stroke="#d0d7e3" stroke-width="1.100" stroke-linejoin="round"/><polyline points="1300,400 1330,440 1360,470" fill="none" stroke="#d0d7e3" stroke-width="1.100" stroke-linejoin="round"/><polyline points="1185,560 1240,570 1290,560" fill="none" stroke="#d0d7e3" stroke-width="1.100" stroke-linejoin="round"/><polyline points="1440,560 1470,600 1520,620" fill="none" stroke="#d0d7e3" stroke-width="1.100" stroke-linejoin="round"/><polyline points="1560,480 1600,500 1620,540" fill="none" stroke="#d0d7e3" stroke-width="1.100" stroke-linejoin="round"/><polyline points="1660,600 1700,610 1745,600" fill="none" stroke="#d0d7e3" stroke-width="1.100" stroke-linejoin="round"/><polyline points="1800,640 1830,680 1840,745" fill="none" stroke="#d0d7e3" stroke-width="1.100" stroke-linejoin="round"/><polyline points="1590,700 1620,720 1640,745" fill="none" stroke="#d0d7e3" stroke-width="1.100" stroke-linejoin="round"/><polyline points="1320,660 1360,700 1385,745" fill="none" stroke="#d0d7e3" stroke-width="1.100" stroke-linejoin="round"/><polyline points="1250,300 1255,350 1235,390" fill="none" stroke="#d0d7e3" stroke-width="1.100" stroke-linejoin="round"/><polyline points="1420,130 1425,160" fill="none" stroke="#d0d7e3" stroke-width="1.100" stroke-linejoin="round"/><polyline points="1545,130 1550,160 1580,175" fill="none" stroke="#d0d7e3" stroke-width="1.100" stroke-linejoin="round"/><polyline points="1720,130 1725,160 1760,175 1800,170 1834,160" fill="none" stroke="#d0d7e3" stroke-width="1.100" stroke-linejoin="round"/><polyline points="1185,287 1240,300 1290,312 1345,314 1370,322 1400,350 1430,372 1470,385 1500,378 1532,368 1560,375" fill="none" stroke="#c2cad8" stroke-width="2.2" stroke-linejoin="round"/><polyline points="1185,371 1225,392 1260,420 1300,450 1345,483 1385,520 1410,550 1445,600 1475,640 1500,680 1530,720 1545,745" fill="none" stroke="#c2cad8" stroke-width="2.6" stroke-linejoin="round"/><polyline points="1330,130 1345,150 1375,165 1420,172 1450,190 1470,215 1500,228 1520,225 1540,210 1580,190 1620,182 1660,180 1700,160 1740,140 1760,130" fill="none" stroke="#c2cad8" stroke-width="2.2" stroke-linejoin="round"/><polyline points="1680,130 1681,160 1690,190 1680,215 1672,243 1676,287 1703,300 1740,330 1790,375 1830,410 1860,450 1880,480" fill="none" stroke="#c2cad8" stroke-width="2.2" stroke-linejoin="round"/><polyline points="1532,395 1570,400 1610,395 1640,390 1660,392 1700,398 1740,405 1800,402 1850,395 1905,388" fill="none" stroke="#c2cad8" stroke-width="2.4" stroke-linejoin="round"/><polyline points="1835,130 1834,200 1840,260 1836,290 1800,330 1780,360 1782,405 1772,450 1755,500 1760,540 1750,580 1735,620 1720,660 1700,700 1690,745" fill="none" stroke="#c2cad8" stroke-width="1.8" stroke-linejoin="round"/><polyline points="1600,450 1650,468 1700,488 1750,512 1765,540" fill="none" stroke="#c2cad8" stroke-width="2" stroke-linejoin="round"/><polyline points="1220,490 1260,488 1300,495 1330,510 1345,530 1350,560 1365,580 1385,600 1400,640 1410,680 1420,745" fill="none" stroke="#c2cad8" stroke-width="2" stroke-linejoin="round"/><polyline points="1185,520 1215,500 1240,490" fill="none" stroke="#c2cad8" stroke-width="2" stroke-linejoin="round"/><polyline points="1215,520 1218,560 1210,600 1205,640 1215,690 1220,745" fill="none" stroke="#c2cad8" stroke-width="1.8" stroke-linejoin="round"/><polyline points="1354,456 1345,483" fill="none" stroke="#c2cad8" stroke-width="2" stroke-linejoin="round"/><polyline points="1345,483 1325,505" fill="none" stroke="#c2cad8" stroke-width="2" stroke-linejoin="round"/><polyline points="1770,600 1800,610 1840,630 1870,670 1880,700" fill="none" stroke="#c2cad8" stroke-width="1.8" stroke-linejoin="round"/><polyline points="1380,605 1390,640 1400,670" fill="none" stroke="#c2cad8" stroke-width="1.6" stroke-linejoin="round"/><polyline points="1532,600 1570,610 1620,640 1660,670" fill="none" stroke="#c2cad8" stroke-width="1.2" stroke-linejoin="round"/><polyline points="1860,745 1880,680 1895,600 1900,520 1905,440" fill="none" stroke="#c2cad8" stroke-width="2.4" stroke-linejoin="round"/><polyline points="1185,700 1230,690 1260,700" fill="none" stroke="#c2cad8" stroke-width="1.2" stroke-linejoin="round"/><polyline points="1440,130 1430,170 1435,200" fill="none" stroke="#c2cad8" stroke-width="1.2" stroke-linejoin="round"/><polyline points="1240,130 1260,170 1300,180 1330,200" fill="none" stroke="#c2cad8" stroke-width="1.2" stroke-linejoin="round"/><polyline points="1620,230 1660,250 1700,260 1760,250 1834,232 1905,222" fill="none" stroke="#c2cad8" stroke-width="1.2" stroke-linejoin="round"/><polyline points="1185,590 1240,600 1300,640 1360,660" fill="none" stroke="#c2cad8" stroke-width="1.2" stroke-linejoin="round"/><polyline points="1540,700 1600,690 1660,700 1720,690" fill="none" stroke="#c2cad8" stroke-width="1.2" stroke-linejoin="round"/><polyline points="1189,158 1205,184 1215,228 1214,268 1200,320 1185,362" fill="none" stroke="#98a8ca" stroke-width="4.500"/><polyline points="1185,658 1230,700 1279,744" fill="none" stroke="#8fa0c4" stroke-width="4"/><polyline points="1870,745 1888,660 1896,560 1898,440" fill="none" stroke="#d5dae3" stroke-width="3"/><text x="1529.5" y="189.0" font-size="10" fill="#4a4e54" text-anchor="middle" textLength="13" lengthAdjust="spacingAndGlyphs" transform="rotate(-42 1529.5 185.5)" stroke="#fff" stroke-width="2.600" stroke-linejoin="round" paint-order="stroke">Via</text><text x="1576" y="184.5" font-size="10" fill="#4a4e54" text-anchor="middle" textLength="78" lengthAdjust="spacingAndGlyphs" transform="rotate(5 1576 181)" stroke="#fff" stroke-width="2.600" stroke-linejoin="round" paint-order="stroke">Barbariga Paluello</text><text x="1338" y="408.5" font-size="10" fill="#4a4e54" text-anchor="middle" textLength="56" lengthAdjust="spacingAndGlyphs" transform="rotate(36 1338 405)" stroke="#fff" stroke-width="2.600" stroke-linejoin="round" paint-order="stroke">Via Villanova</text><text x="1619.4" y="448.5" font-size="10" fill="#4a4e54" text-anchor="middle" textLength="56" lengthAdjust="spacingAndGlyphs" transform="rotate(26 1619.4 445)" stroke="#fff" stroke-width="2.600" stroke-linejoin="round" paint-order="stroke">Via Fogarine</text><text x="1678.4" y="481.5" font-size="10" fill="#4a4e54" text-anchor="middle" textLength="50" lengthAdjust="spacingAndGlyphs" transform="rotate(25 1678.4 478)" stroke="#fff" stroke-width="2.600" stroke-linejoin="round" paint-order="stroke">Via Bosello</text><text x="1768.5" y="468.7" font-size="10" fill="#4a4e54" text-anchor="middle" textLength="40" lengthAdjust="spacingAndGlyphs" transform="rotate(-66 1768.5 465.2)" stroke="#fff" stroke-width="2.600" stroke-linejoin="round" paint-order="stroke">Via Roma</text><text x="1412" y="574.9" font-size="10" fill="#4a4e54" text-anchor="middle" textLength="55" lengthAdjust="spacingAndGlyphs" transform="rotate(58 1412 571.4)" stroke="#fff" stroke-width="2.600" stroke-linejoin="round" paint-order="stroke">Via dei Vivai</text><text x="1499.3" y="629.8" font-size="10" fill="#4a4e54" text-anchor="middle" textLength="48" lengthAdjust="spacingAndGlyphs" transform="rotate(22 1499.3 626.3)" stroke="#fff" stroke-width="2.600" stroke-linejoin="round" paint-order="stroke">Via Chiusa</text><text x="1434" y="298.3" font-size="10" fill="#1a8fb0" text-anchor="middle" textLength="29" lengthAdjust="spacingAndGlyphs" transform="rotate(57 1434 294.8)" stroke="#fff" stroke-width="2.600" stroke-linejoin="round" paint-order="stroke">Brenta</text><text x="1617.6" y="604.2" font-size="10" fill="#1a8fb0" text-anchor="middle" textLength="29" lengthAdjust="spacingAndGlyphs" transform="rotate(55 1617.6 600.7)" stroke="#fff" stroke-width="2.600" stroke-linejoin="round" paint-order="stroke">Brenta</text><text x="1464" y="548.5" font-size="10" fill="#4a4e54" text-anchor="middle" textLength="62" lengthAdjust="spacingAndGlyphs" transform="rotate(-72 1464 545)" stroke="#fff" stroke-width="2.600" stroke-linejoin="round" paint-order="stroke">Via San Marco</text><text x="1408.4" y="264.5" font-size="10" fill="#4a4e54" text-anchor="middle" textLength="52" lengthAdjust="spacingAndGlyphs" transform="rotate(61 1408.4 261)" stroke="#fff" stroke-width="2.600" stroke-linejoin="round" paint-order="stroke">Via Dante A.</text><text x="1700" y="744.5" font-size="10" fill="#4a4e54" text-anchor="middle" textLength="24" lengthAdjust="spacingAndGlyphs" transform="rotate(-16 1700 741)" stroke="#fff" stroke-width="2.600" stroke-linejoin="round" paint-order="stroke">Fosso</text><rect x="1337.2" y="142.89999999999998" width="25.6" height="12.2" rx="3.200" fill="#fff" opacity=".85"/><rect x="1338.5" y="144.2" width="23" height="9.6" rx="2.200" fill="#4d83dc" stroke="#3367c8" stroke-width=".7"/><text x="1350" y="152.1" font-size="8.800" font-weight="700" fill="#fff" text-anchor="middle" textLength="17" lengthAdjust="spacingAndGlyphs">SR11</text><rect x="1489.2" y="180.89999999999998" width="25.6" height="12.2" rx="3.200" fill="#fff" opacity=".85"/><rect x="1490.5" y="182.2" width="23" height="9.6" rx="2.200" fill="#4d83dc" stroke="#3367c8" stroke-width=".7"/><text x="1502" y="190.1" font-size="8.800" font-weight="700" fill="#fff" text-anchor="middle" textLength="17" lengthAdjust="spacingAndGlyphs">SR11</text><rect x="1480.2" y="156.89999999999998" width="25.6" height="12.2" rx="3.200" fill="#fff" opacity=".85"/><rect x="1481.5" y="158.2" width="23" height="9.6" rx="2.200" fill="#4d83dc" stroke="#3367c8" stroke-width=".7"/><text x="1493" y="166.1" font-size="8.800" font-weight="700" fill="#fff" text-anchor="middle" textLength="17" lengthAdjust="spacingAndGlyphs">SP25</text><rect x="1667.2" y="163.89999999999998" width="25.6" height="12.2" rx="3.200" fill="#fff" opacity=".85"/><rect x="1668.5" y="165.2" width="23" height="9.6" rx="2.200" fill="#4d83dc" stroke="#3367c8" stroke-width=".7"/><text x="1680" y="173.1" font-size="8.800" font-weight="700" fill="#fff" text-anchor="middle" textLength="17" lengthAdjust="spacingAndGlyphs">SP12</text><rect x="1660.2" y="236.89999999999998" width="25.6" height="12.2" rx="3.200" fill="#fff" opacity=".85"/><rect x="1661.5" y="238.2" width="23" height="9.6" rx="2.200" fill="#4d83dc" stroke="#3367c8" stroke-width=".7"/><text x="1673" y="246.1" font-size="8.800" font-weight="700" fill="#fff" text-anchor="middle" textLength="17" lengthAdjust="spacingAndGlyphs">SP12</text><rect x="1818.2" y="149.89999999999998" width="25.6" height="12.2" rx="3.200" fill="#fff" opacity=".85"/><rect x="1819.5" y="151.2" width="23" height="9.6" rx="2.200" fill="#4d83dc" stroke="#3367c8" stroke-width=".7"/><text x="1831" y="159.1" font-size="8.800" font-weight="700" fill="#fff" text-anchor="middle" textLength="17" lengthAdjust="spacingAndGlyphs">SP19</text><rect x="1382.2" y="167.89999999999998" width="25.6" height="12.2" rx="3.200" fill="#fff" opacity=".85"/><rect x="1383.5" y="169.2" width="23" height="9.6" rx="2.200" fill="#4d83dc" stroke="#3367c8" stroke-width=".7"/><text x="1395" y="177.1" font-size="8.800" font-weight="700" fill="#fff" text-anchor="middle" textLength="17" lengthAdjust="spacingAndGlyphs">SR11</text><rect x="1365.2" y="336.9" width="25.6" height="12.2" rx="3.200" fill="#fff" opacity=".85"/><rect x="1366.5" y="338.2" width="23" height="9.6" rx="2.200" fill="#4d83dc" stroke="#3367c8" stroke-width=".7"/><text x="1378" y="346.1" font-size="8.800" font-weight="700" fill="#fff" text-anchor="middle" textLength="17" lengthAdjust="spacingAndGlyphs">SP17</text><rect x="1542.2" y="393.9" width="25.6" height="12.2" rx="3.200" fill="#fff" opacity=".85"/><rect x="1543.5" y="395.2" width="23" height="9.6" rx="2.200" fill="#4d83dc" stroke="#3367c8" stroke-width=".7"/><text x="1555" y="403.1" font-size="8.800" font-weight="700" fill="#fff" text-anchor="middle" textLength="17" lengthAdjust="spacingAndGlyphs">SP17</text><rect x="1646.2" y="411.9" width="25.6" height="12.2" rx="3.200" fill="#fff" opacity=".85"/><rect x="1647.5" y="413.2" width="23" height="9.6" rx="2.200" fill="#4d83dc" stroke="#3367c8" stroke-width=".7"/><text x="1659" y="421.1" font-size="8.800" font-weight="700" fill="#fff" text-anchor="middle" textLength="17" lengthAdjust="spacingAndGlyphs">SP12</text><rect x="1258.2" y="482.9" width="25.6" height="12.2" rx="3.200" fill="#fff" opacity=".85"/><rect x="1259.5" y="484.2" width="23" height="9.6" rx="2.200" fill="#4d83dc" stroke="#3367c8" stroke-width=".7"/><text x="1271" y="492.1" font-size="8.800" font-weight="700" fill="#fff" text-anchor="middle" textLength="17" lengthAdjust="spacingAndGlyphs">SP35</text><rect x="1201.2" y="637.9000000000001" width="25.6" height="12.2" rx="3.200" fill="#fff" opacity=".85"/><rect x="1202.5" y="639.2" width="23" height="9.6" rx="2.200" fill="#4d83dc" stroke="#3367c8" stroke-width=".7"/><text x="1214" y="647.1" font-size="8.800" font-weight="700" fill="#fff" text-anchor="middle" textLength="17" lengthAdjust="spacingAndGlyphs">SP35</text><rect x="1365.2" y="598.9000000000001" width="25.6" height="12.2" rx="3.200" fill="#fff" opacity=".85"/><rect x="1366.5" y="600.2" width="23" height="9.6" rx="2.200" fill="#4d83dc" stroke="#3367c8" stroke-width=".7"/><text x="1378" y="608.1" font-size="8.800" font-weight="700" fill="#fff" text-anchor="middle" textLength="17" lengthAdjust="spacingAndGlyphs">SP40</text><rect x="1871.2" y="606.9000000000001" width="25.6" height="12.2" rx="3.200" fill="#fff" opacity=".85"/><rect x="1872.5" y="608.2" width="23" height="9.6" rx="2.200" fill="#4d83dc" stroke="#3367c8" stroke-width=".7"/><text x="1884" y="616.1" font-size="8.800" font-weight="700" fill="#fff" text-anchor="middle" textLength="17" lengthAdjust="spacingAndGlyphs">SP13</text><rect x="1478.65" y="705.3000000000001" width="28.1" height="12.2" rx="3.200" fill="#fff" opacity=".85"/><rect x="1479.95" y="706.6" width="25.5" height="9.6" rx="2.200" fill="#4d83dc" stroke="#3367c8" stroke-width=".7"/><text x="1492.7" y="714.5" font-size="8.800" font-weight="700" fill="#fff" text-anchor="middle" textLength="19.5" lengthAdjust="spacingAndGlyphs">SS516</text><rect x="1172.95" y="650.9000000000001" width="28.1" height="12.2" rx="3.200" fill="#fff" opacity=".85"/><rect x="1174.25" y="652.2" width="25.5" height="9.6" rx="2.200" fill="#4d83dc" stroke="#3367c8" stroke-width=".7"/><text x="1187" y="660.1" font-size="8.800" font-weight="700" fill="#fff" text-anchor="middle" textLength="19.5" lengthAdjust="spacingAndGlyphs">S516</text><rect x="1202.0" y="252" width="22" height="12" rx="6" fill="#6f9e55" stroke="#fff" stroke-width="1.200"/><text x="1213" y="261.1" font-size="8.800" font-weight="700" fill="#fff" text-anchor="middle" textLength="16" lengthAdjust="spacingAndGlyphs">A13</text><text x="1235" y="180.5" font-size="12.6" text-anchor="middle" textLength="60" lengthAdjust="spacingAndGlyphs" fill="#3c4043" stroke="#fff" stroke-width="3" stroke-linejoin="round">Noventana</text><text x="1235" y="180.5" font-size="12.6" text-anchor="middle" textLength="60" lengthAdjust="spacingAndGlyphs" fill="#3c4043" stroke="#3c4043" stroke-width=".45">Noventana</text><text x="1430" y="213.5" font-size="12.6" text-anchor="middle" textLength="23" lengthAdjust="spacingAndGlyphs" fill="#3c4043" stroke="#fff" stroke-width="3" stroke-linejoin="round">Stra</text><text x="1430" y="213.5" font-size="12.6" text-anchor="middle" textLength="23" lengthAdjust="spacingAndGlyphs" fill="#3c4043" stroke="#3c4043" stroke-width=".45">Stra</text><text x="1566" y="162.5" font-size="12.6" text-anchor="middle" textLength="84" lengthAdjust="spacingAndGlyphs" fill="#3c4043" stroke="#fff" stroke-width="3" stroke-linejoin="round">Fiesso D'artico</text><text x="1566" y="162.5" font-size="12.6" text-anchor="middle" textLength="84" lengthAdjust="spacingAndGlyphs" fill="#3c4043" stroke="#3c4043" stroke-width=".45">Fiesso D'artico</text><text x="1681" y="196.5" font-size="12.6" text-anchor="middle" textLength="78" lengthAdjust="spacingAndGlyphs" fill="#3c4043" stroke="#fff" stroke-width="3" stroke-linejoin="round">Brigo-Paluello</text><text x="1681" y="196.5" font-size="12.6" text-anchor="middle" textLength="78" lengthAdjust="spacingAndGlyphs" fill="#3c4043" stroke="#3c4043" stroke-width=".45">Brigo-Paluello</text><text x="1313" y="306.5" font-size="12.6" text-anchor="middle" textLength="51" lengthAdjust="spacingAndGlyphs" fill="#3c4043" stroke="#fff" stroke-width="3" stroke-linejoin="round">Tombelle</text><text x="1313" y="306.5" font-size="12.6" text-anchor="middle" textLength="51" lengthAdjust="spacingAndGlyphs" fill="#3c4043" stroke="#3c4043" stroke-width=".45">Tombelle</text><text x="1502" y="330.5" font-size="12.6" text-anchor="middle" textLength="29" lengthAdjust="spacingAndGlyphs" fill="#3c4043" stroke="#fff" stroke-width="3" stroke-linejoin="round">Galta</text><text x="1502" y="330.5" font-size="12.6" text-anchor="middle" textLength="29" lengthAdjust="spacingAndGlyphs" fill="#3c4043" stroke="#3c4043" stroke-width=".45">Galta</text><text x="1446" y="387.5" font-size="12.6" text-anchor="middle" textLength="52" lengthAdjust="spacingAndGlyphs" fill="#3c4043" stroke="#fff" stroke-width="3" stroke-linejoin="round">Vigonovo</text><text x="1446" y="387.5" font-size="12.6" text-anchor="middle" textLength="52" lengthAdjust="spacingAndGlyphs" fill="#3c4043" stroke="#3c4043" stroke-width=".45">Vigonovo</text><text x="1226" y="422.5" font-size="12.6" text-anchor="middle" textLength="46" lengthAdjust="spacingAndGlyphs" fill="#3c4043" stroke="#fff" stroke-width="3" stroke-linejoin="round">Villatora</text><text x="1226" y="422.5" font-size="12.6" text-anchor="middle" textLength="46" lengthAdjust="spacingAndGlyphs" fill="#3c4043" stroke="#3c4043" stroke-width=".45">Villatora</text><text x="1279" y="450.5" font-size="12.6" text-anchor="middle" textLength="41" lengthAdjust="spacingAndGlyphs" fill="#3c4043" stroke="#fff" stroke-width="3" stroke-linejoin="round">Daniele</text><text x="1279" y="450.5" font-size="12.6" text-anchor="middle" textLength="41" lengthAdjust="spacingAndGlyphs" fill="#3c4043" stroke="#3c4043" stroke-width=".45">Daniele</text><text x="1658" y="394.5" font-size="12.6" text-anchor="middle" textLength="34" lengthAdjust="spacingAndGlyphs" fill="#3c4043" stroke="#fff" stroke-width="3" stroke-linejoin="round">Fossò</text><text x="1658" y="394.5" font-size="12.6" text-anchor="middle" textLength="34" lengthAdjust="spacingAndGlyphs" fill="#3c4043" stroke="#3c4043" stroke-width=".45">Fossò</text><text x="1783" y="410.5" font-size="12.6" text-anchor="middle" textLength="78" lengthAdjust="spacingAndGlyphs" fill="#3c4043" stroke="#fff" stroke-width="3" stroke-linejoin="round">Camponogara</text><text x="1783" y="410.5" font-size="12.6" text-anchor="middle" textLength="78" lengthAdjust="spacingAndGlyphs" fill="#3c4043" stroke="#3c4043" stroke-width=".45">Camponogara</text><text x="1732" y="492.5" font-size="12.6" text-anchor="middle" textLength="43" lengthAdjust="spacingAndGlyphs" fill="#3c4043" stroke="#fff" stroke-width="3" stroke-linejoin="round">Volpato</text><text x="1732" y="492.5" font-size="12.6" text-anchor="middle" textLength="43" lengthAdjust="spacingAndGlyphs" fill="#3c4043" stroke="#3c4043" stroke-width=".45">Volpato</text><text x="1871" y="515.5" font-size="12.6" text-anchor="middle" textLength="49" lengthAdjust="spacingAndGlyphs" fill="#3c4043" stroke="#fff" stroke-width="3" stroke-linejoin="round">Prozzolo</text><text x="1871" y="515.5" font-size="12.6" text-anchor="middle" textLength="49" lengthAdjust="spacingAndGlyphs" fill="#3c4043" stroke="#3c4043" stroke-width=".45">Prozzolo</text><text x="1219" y="514.5" font-size="12.6" text-anchor="middle" textLength="42" lengthAdjust="spacingAndGlyphs" fill="#3c4043" stroke="#fff" stroke-width="3" stroke-linejoin="round">Casone</text><text x="1219" y="514.5" font-size="12.6" text-anchor="middle" textLength="42" lengthAdjust="spacingAndGlyphs" fill="#3c4043" stroke="#3c4043" stroke-width=".45">Casone</text><text x="1322" y="509.5" font-size="12.6" text-anchor="middle" textLength="46" lengthAdjust="spacingAndGlyphs" fill="#3c4043" stroke="#fff" stroke-width="3" stroke-linejoin="round">Saonara</text><text x="1322" y="509.5" font-size="12.6" text-anchor="middle" textLength="46" lengthAdjust="spacingAndGlyphs" fill="#3c4043" stroke="#3c4043" stroke-width=".45">Saonara</text><text x="1461" y="507.5" font-size="12.6" text-anchor="middle" textLength="44" lengthAdjust="spacingAndGlyphs" fill="#3c4043" stroke="#fff" stroke-width="3" stroke-linejoin="round">Celeseo</text><text x="1461" y="507.5" font-size="12.6" text-anchor="middle" textLength="44" lengthAdjust="spacingAndGlyphs" fill="#3c4043" stroke="#3c4043" stroke-width=".45">Celeseo</text><text x="1629" y="559.5" font-size="12.6" text-anchor="middle" textLength="42" lengthAdjust="spacingAndGlyphs" fill="#3c4043" stroke="#fff" stroke-width="3" stroke-linejoin="round">Sandon</text><text x="1629" y="559.5" font-size="12.6" text-anchor="middle" textLength="42" lengthAdjust="spacingAndGlyphs" fill="#3c4043" stroke="#3c4043" stroke-width=".45">Sandon</text><text x="1753" y="567.5" font-size="12.6" text-anchor="middle" textLength="55" lengthAdjust="spacingAndGlyphs" fill="#3c4043" stroke="#fff" stroke-width="3" stroke-linejoin="round">Premaore</text><text x="1753" y="567.5" font-size="12.6" text-anchor="middle" textLength="55" lengthAdjust="spacingAndGlyphs" fill="#3c4043" stroke="#3c4043" stroke-width=".45">Premaore</text><text x="1329" y="591.5" font-size="12.6" text-anchor="middle" textLength="48" lengthAdjust="spacingAndGlyphs" fill="#3c4043" stroke="#fff" stroke-width="3" stroke-linejoin="round">Salmaso</text><text x="1329" y="591.5" font-size="12.6" text-anchor="middle" textLength="48" lengthAdjust="spacingAndGlyphs" fill="#3c4043" stroke="#3c4043" stroke-width=".45">Salmaso</text><text x="1295" y="615.5" font-size="12.6" text-anchor="middle" textLength="30" lengthAdjust="spacingAndGlyphs" fill="#3c4043" stroke="#fff" stroke-width="3" stroke-linejoin="round">Savio</text><text x="1295" y="615.5" font-size="12.6" text-anchor="middle" textLength="30" lengthAdjust="spacingAndGlyphs" fill="#3c4043" stroke="#3c4043" stroke-width=".45">Savio</text><text x="1552" y="637.5" font-size="12.6" text-anchor="middle" textLength="44" lengthAdjust="spacingAndGlyphs" fill="#3c4043" stroke="#fff" stroke-width="3" stroke-linejoin="round">Dainese</text><text x="1552" y="637.5" font-size="12.6" text-anchor="middle" textLength="44" lengthAdjust="spacingAndGlyphs" fill="#3c4043" stroke="#3c4043" stroke-width=".45">Dainese</text><text x="1768" y="622.5" font-size="12.6" text-anchor="middle" textLength="37" lengthAdjust="spacingAndGlyphs" fill="#3c4043" stroke="#fff" stroke-width="3" stroke-linejoin="round">Cornio</text><text x="1768" y="622.5" font-size="12.6" text-anchor="middle" textLength="37" lengthAdjust="spacingAndGlyphs" fill="#3c4043" stroke="#3c4043" stroke-width=".45">Cornio</text><text x="1681" y="657.5" font-size="12.6" text-anchor="middle" textLength="42" lengthAdjust="spacingAndGlyphs" fill="#3c4043" stroke="#fff" stroke-width="3" stroke-linejoin="round">Carraro</text><text x="1681" y="657.5" font-size="12.6" text-anchor="middle" textLength="42" lengthAdjust="spacingAndGlyphs" fill="#3c4043" stroke="#3c4043" stroke-width=".45">Carraro</text><text x="1218" y="693.5" font-size="12.6" text-anchor="middle" textLength="45" lengthAdjust="spacingAndGlyphs" fill="#3c4043" stroke="#fff" stroke-width="3" stroke-linejoin="round">Legnaro</text><text x="1218" y="693.5" font-size="12.6" text-anchor="middle" textLength="45" lengthAdjust="spacingAndGlyphs" fill="#3c4043" stroke="#3c4043" stroke-width=".45">Legnaro</text><text x="1421" y="669.5" font-size="12.6" text-anchor="middle" textLength="80" lengthAdjust="spacingAndGlyphs" fill="#3c4043" stroke="#fff" stroke-width="3" stroke-linejoin="round">Sant'Angelo di</text><text x="1421" y="669.5" font-size="12.6" text-anchor="middle" textLength="80" lengthAdjust="spacingAndGlyphs" fill="#3c4043" stroke="#3c4043" stroke-width=".45">Sant'Angelo di</text><text x="1421" y="682.5" font-size="12.6" text-anchor="middle" textLength="82" lengthAdjust="spacingAndGlyphs" fill="#3c4043" stroke="#fff" stroke-width="3" stroke-linejoin="round">Piove di Sacco</text><text x="1421" y="682.5" font-size="12.6" text-anchor="middle" textLength="82" lengthAdjust="spacingAndGlyphs" fill="#3c4043" stroke="#3c4043" stroke-width=".45">Piove di Sacco</text><text x="1793" y="748.5" font-size="12.6" text-anchor="middle" textLength="32" lengthAdjust="spacingAndGlyphs" fill="#3c4043" stroke="#fff" stroke-width="3" stroke-linejoin="round">Bojon</text><text x="1793" y="748.5" font-size="12.6" text-anchor="middle" textLength="32" lengthAdjust="spacingAndGlyphs" fill="#3c4043" stroke="#3c4043" stroke-width=".45">Bojon</text><text x="1193" y="176.0" font-size="12.6" text-anchor="end" textLength="13.5" lengthAdjust="spacingAndGlyphs" fill="#3c4043" stroke="#fff" stroke-width="3" stroke-linejoin="round">na</text><text x="1193" y="176.0" font-size="12.6" text-anchor="end" textLength="13.5" lengthAdjust="spacingAndGlyphs" fill="#3c4043" stroke="#3c4043" stroke-width=".45">na</text><text x="1189" y="163.0" font-size="12.6" text-anchor="end" textLength="6.5" lengthAdjust="spacingAndGlyphs" fill="#3c4043" stroke="#fff" stroke-width="3" stroke-linejoin="round">a</text><text x="1189" y="163.0" font-size="12.6" text-anchor="end" textLength="6.5" lengthAdjust="spacingAndGlyphs" fill="#3c4043" stroke="#3c4043" stroke-width=".45">a</text><text x="1892" y="399.5" font-size="12.6" text-anchor="start" textLength="13" lengthAdjust="spacingAndGlyphs" fill="#3c4043" stroke="#fff" stroke-width="3" stroke-linejoin="round">Ca</text><text x="1892" y="399.5" font-size="12.6" text-anchor="start" textLength="13" lengthAdjust="spacingAndGlyphs" fill="#3c4043" stroke="#3c4043" stroke-width=".45">Ca</text><text x="1894" y="635.5" font-size="12.6" text-anchor="start" textLength="13" lengthAdjust="spacingAndGlyphs" fill="#3c4043" stroke="#fff" stroke-width="3" stroke-linejoin="round">Ca</text><text x="1894" y="635.5" font-size="12.6" text-anchor="start" textLength="13" lengthAdjust="spacingAndGlyphs" fill="#3c4043" stroke="#3c4043" stroke-width=".45">Ca</text><text x="1889" y="711.5" font-size="12.6" text-anchor="start" textLength="16" lengthAdjust="spacingAndGlyphs" font-weight="400" fill="#5f6368" stroke="#fff" stroke-width="2.600" stroke-linejoin="round" paint-order="stroke">'All</text><text x="1568" y="147.5" font-size="12.5" text-anchor="start" textLength="58" lengthAdjust="spacingAndGlyphs" font-weight="400" fill="#e0762b" stroke="#fff" stroke-width="2.600" stroke-linejoin="round" paint-order="stroke">Da Giorgio</text><text x="1692" y="147.5" font-size="12.5" text-anchor="start" textLength="83" lengthAdjust="spacingAndGlyphs" font-weight="400" fill="#e0762b" stroke="#fff" stroke-width="2.600" stroke-linejoin="round" paint-order="stroke">Open Gate Pub</text><text x="1849" y="281.5" font-size="12.5" text-anchor="start" textLength="52" lengthAdjust="spacingAndGlyphs" font-weight="400" fill="#e0762b" stroke="#fff" stroke-width="2.600" stroke-linejoin="round" paint-order="stroke">Al Fogher</text><text x="1849" y="293.5" font-size="12.5" text-anchor="start" textLength="56" lengthAdjust="spacingAndGlyphs" font-weight="400" fill="#e0762b" stroke="#fff" stroke-width="2.600" stroke-linejoin="round" paint-order="stroke">Ristorante</text><text x="1369" y="444.5" font-size="12.5" text-anchor="start" textLength="93" lengthAdjust="spacingAndGlyphs" font-weight="400" fill="#e0762b" stroke="#fff" stroke-width="2.600" stroke-linejoin="round" paint-order="stroke">Trattoria pizzeria</text><text x="1369" y="457.5" font-size="12.5" text-anchor="start" textLength="50" lengthAdjust="spacingAndGlyphs" font-weight="400" fill="#e0762b" stroke="#fff" stroke-width="2.600" stroke-linejoin="round" paint-order="stroke">Da Mario</text><text x="1185" y="389.5" font-size="12.5" text-anchor="start" textLength="27" lengthAdjust="spacingAndGlyphs" font-weight="400" fill="#e0762b" stroke="#fff" stroke-width="2.600" stroke-linejoin="round" paint-order="stroke">onara</text><text x="1185" y="600.5" font-size="12.5" text-anchor="start" textLength="61" lengthAdjust="spacingAndGlyphs" font-weight="400" fill="#e0762b" stroke="#fff" stroke-width="2.600" stroke-linejoin="round" paint-order="stroke">oria Da Poi</text><text x="1278" y="715.3" font-size="12.5" text-anchor="start" textLength="100" lengthAdjust="spacingAndGlyphs" font-weight="400" fill="#e0762b" stroke="#fff" stroke-width="2.600" stroke-linejoin="round" paint-order="stroke">Osteria dal Nonno</text><text x="1278" y="727.3" font-size="12.5" text-anchor="start" textLength="65" lengthAdjust="spacingAndGlyphs" font-weight="400" fill="#e0762b" stroke="#fff" stroke-width="2.600" stroke-linejoin="round" paint-order="stroke">(Ristorante)</text><text x="1485" y="208.5" font-size="12.5" text-anchor="start" textLength="97" lengthAdjust="spacingAndGlyphs" font-weight="400" fill="#9b5de5" stroke="#fff" stroke-width="2.600" stroke-linejoin="round" paint-order="stroke">Museo Nazionale</text><text x="1485" y="220.5" font-size="12.5" text-anchor="start" textLength="77" lengthAdjust="spacingAndGlyphs" font-weight="400" fill="#9b5de5" stroke="#fff" stroke-width="2.600" stroke-linejoin="round" paint-order="stroke">di Villa Pisani</text><text x="1185" y="345.5" font-size="12.5" text-anchor="start" textLength="72" lengthAdjust="spacingAndGlyphs" font-weight="400" fill="#e83fc4" stroke="#fff" stroke-width="2.600" stroke-linejoin="round" paint-order="stroke">Padova Hotel</text><text x="1771" y="344.1" font-size="12.5" text-anchor="end" textLength="107" lengthAdjust="spacingAndGlyphs" font-weight="400" fill="#3b84f2" stroke="#fff" stroke-width="2.600" stroke-linejoin="round" paint-order="stroke">Aliper supermercati</text><text x="1771" y="356.3" font-size="12.5" text-anchor="end" textLength="84" lengthAdjust="spacingAndGlyphs" font-weight="400" fill="#3b84f2" stroke="#fff" stroke-width="2.600" stroke-linejoin="round" paint-order="stroke">- Camponogara</text><text x="1742" y="667.9" font-size="12.5" text-anchor="start" textLength="118" lengthAdjust="spacingAndGlyphs" font-weight="400" fill="#3b84f2" stroke="#fff" stroke-width="2.600" stroke-linejoin="round" paint-order="stroke">Supermercato Famila</text><text x="1547" y="689.3" font-size="12.5" text-anchor="start" textLength="92" lengthAdjust="spacingAndGlyphs" font-weight="400" fill="#2f9c74" stroke="#fff" stroke-width="2.600" stroke-linejoin="round" paint-order="stroke">Tiger Experience</text><path d="M1634,148 L1639,153.5 L1644,148z" fill="#fff"/><circle cx="1639" cy="140" r="10.200" fill="#fff"/><circle cx="1639" cy="140" r="8.600" fill="#f5822a"/><path d="M1635.4,135.5v3.400a1.300,1.300 0 0 0 1,1.300v4.600h1.200v-4.600a1.300,1.300 0 0 0 1,-1.300v-3.400h-.8v3h-.6v-3h-.700v3h-.6v-3zM1640.2,135.5c1.300,.3 2.200,1.600 2.200,3.400v2h-1v3.900h-1.200z" fill="#fff"/><path d="M1673,148 L1678,153.5 L1683,148z" fill="#fff"/><circle cx="1678" cy="140" r="10.200" fill="#fff"/><circle cx="1678" cy="140" r="8.600" fill="#f5822a"/><path d="M1673.8,135.6h8.400l-3.600,4.300v3.300h1.800v1.100h-4.800v-1.100h1.800v-3.300z" fill="#fff"/><path d="M1829,289 L1834,294.5 L1839,289z" fill="#fff"/><circle cx="1834" cy="281" r="10.200" fill="#fff"/><circle cx="1834" cy="281" r="8.600" fill="#f5822a"/><path d="M1830.4,276.5v3.400a1.300,1.300 0 0 0 1,1.300v4.600h1.200v-4.600a1.300,1.300 0 0 0 1,-1.300v-3.400h-.8v3h-.6v-3h-.700v3h-.6v-3zM1835.2,276.5c1.300,.3 2.200,1.600 2.200,3.400v2h-1v3.900h-1.200z" fill="#fff"/><path d="M1349,453 L1354,458.5 L1359,453z" fill="#fff"/><circle cx="1354" cy="445" r="10.200" fill="#fff"/><circle cx="1354" cy="445" r="8.600" fill="#f5822a"/><path d="M1350.4,440.5v3.400a1.300,1.300 0 0 0 1,1.300v4.600h1.200v-4.600a1.300,1.300 0 0 0 1,-1.300v-3.400h-.8v3h-.6v-3h-.700v3h-.6v-3zM1355.2,440.5c1.300,.3 2.200,1.600 2.200,3.400v2h-1v3.900h-1.200z" fill="#fff"/><path d="M1221,392 L1226,397.5 L1231,392z" fill="#fff"/><circle cx="1226" cy="384" r="10.200" fill="#fff"/><circle cx="1226" cy="384" r="8.600" fill="#f5822a"/><path d="M1222.4,379.5v3.400a1.300,1.300 0 0 0 1,1.300v4.600h1.200v-4.600a1.300,1.300 0 0 0 1,-1.300v-3.400h-.8v3h-.6v-3h-.700v3h-.6v-3zM1227.2,379.5c1.300,.3 2.200,1.600 2.200,3.400v2h-1v3.900h-1.200z" fill="#fff"/><path d="M1255,604 L1260,609.5 L1265,604z" fill="#fff"/><circle cx="1260" cy="596" r="10.200" fill="#fff"/><circle cx="1260" cy="596" r="8.600" fill="#f5822a"/><path d="M1256.4,591.5v3.400a1.300,1.300 0 0 0 1,1.300v4.600h1.200v-4.600a1.300,1.300 0 0 0 1,-1.300v-3.400h-.8v3h-.6v-3h-.700v3h-.6v-3zM1261.2,591.5c1.300,.3 2.200,1.600 2.200,3.400v2h-1v3.900h-1.200z" fill="#fff"/><path d="M1259,723 L1264,728.5 L1269,723z" fill="#fff"/><circle cx="1264" cy="715" r="10.200" fill="#fff"/><circle cx="1264" cy="715" r="8.600" fill="#f5822a"/><path d="M1260.4,710.5v3.400a1.300,1.300 0 0 0 1,1.300v4.600h1.200v-4.600a1.300,1.300 0 0 0 1,-1.300v-3.400h-.8v3h-.6v-3h-.700v3h-.6v-3zM1265.2,710.5c1.300,.3 2.200,1.600 2.200,3.400v2h-1v3.900h-1.200z" fill="#fff"/><path d="M1466,215 L1471,220.5 L1476,215z" fill="#fff"/><circle cx="1471" cy="207" r="10.200" fill="#fff"/><circle cx="1471" cy="207" r="8.600" fill="#b56cf0"/><path d="M1471,202.4l4.600,3v.9h-9.200v-.9zM1467.4,207.2h1.500v3.400h-1.500zM1470.25,207.2h1.500v3.400h-1.500zM1473.1,207.2h1.500v3.400h-1.500zM1466.6,211h8.800v1h-8.800z" fill="#fff"/><path d="M1781,351 L1786,356.5 L1791,351z" fill="#fff"/><circle cx="1786" cy="343" r="10.200" fill="#fff"/><circle cx="1786" cy="343" r="8.600" fill="#2196f3"/><path d="M1781,339h1.700l.4,1.200h7.300l-1.300,4.300h-5.300l.2,.9h5v.9h-5.800l-1.500,-6.300h-.7z" fill="#fff"/><circle cx="1784.7" cy="347.3" r=".9" fill="#fff"/><circle cx="1788.6" cy="347.3" r=".9" fill="#fff"/><path d="M1648,691 L1653,696.5 L1658,691z" fill="#fff"/><circle cx="1653" cy="683" r="10.200" fill="#fff"/><circle cx="1653" cy="683" r="8.600" fill="#1ea675"/><path d="M1653,677.8l2.600,3.500h-1.200l2.300,3.100h-1.500l2.400,3.200h-4v1.600h-1.200v-1.600h-4l2.400,-3.200h-1.500l2.300,-3.100h-1.200z" fill="#fff"/><rect x="1884" y="556" width="11" height="12" rx="3" fill="#5b7b9a" stroke="#fff" stroke-width="1.200"/><rect x="1886.500" y="558.500" width="6" height="4" fill="#fff"/><polyline points="1410,187 1418,183 1426,190 1430,200 1433,206 1441,216 1437,221 1448,226 1461,231 1477,227 1491,256 1532,240 1542,233 1576,227 1620,243 1670,237 1674,244 1677,268 1679,286 1676,287 1668,330 1662,362 1665,380 1659,390 1672,396 1684,402 1706,408" fill="none" stroke="#008000" stroke-width="2.800" stroke-linejoin="round" stroke-linecap="round"/><polyline points="1686,286 1703.600,299" fill="none" stroke="#008000" stroke-width="2.800" stroke-linejoin="round" stroke-linecap="round"/><polyline points="1707,434 1690,429 1674,421 1660,417 1656,436 1646,480 1636,522 1624,552 1612,579 1604,584 1607,591 1602,597 1585,603 1568,608 1560,624 1552,650 1544,674 1532,687 1509,686 1477,677 1471,674 1466,681 1433,701 1415,705 1407,712 1403,719 1398,722 1394,708 1400,684 1403,674 1421,673 1425,660 1431,644 1437,620 1442,604 1445,586 1455,572 1469,540 1474,516 1472,502 1453,479 1448,477 1442,466 1437,462 1413,454 1415,446 1421,436 1433,416 1437,404 1446,390 1447,376 1442,358 1443,344 1433,326 1425,304 1419,280 1417,268 1399,238 1391,226 1383,225 1382,222 1419,202 1420,196 1410,187" fill="none" stroke="#008000" stroke-width="2.800" stroke-linejoin="round" stroke-linecap="round"/><path d="M1410,187 C1409,181 1399.5,174 1399.5,162 A10.5,10.5 0 0 1 1420.5,162 C1420.5,174 1411,181 1410,187z" fill="#c0281f"/><path d="M1703.6,299 C1702.6,293 1693.1,286 1693.1,274 A10.5,10.5 0 0 1 1714.1,274 C1714.1,286 1704.6,293 1703.6,299z" fill="#c0281f"/><path d="M1406.8,712 C1405.8,706 1396.3,699 1396.3,687 A10.5,10.5 0 0 1 1417.3,687 C1417.3,699 1407.8,706 1406.8,712z" fill="#c0281f"/><path d="M1707,434 C1706,422 1699,418 1699,412 A8,8 0 0 1 1715,412 C1715,418 1708,422 1707,434z" fill="#6991fd" stroke="#1a1a3a" stroke-width="1"/><circle cx="1707" cy="411" r="1.800" fill="#000"/><defs><filter id="sh" x="-30%" y="-60%" width="160%" height="260%"><feDropShadow dx="3" dy="7" stdDeviation="6.500" flood-color="#000" flood-opacity=".62"/></filter></defs><rect x="1369" y="157.600" width="82" height="17.400" rx="3" fill="#fff" filter="url(#sh)"/><text x="1370" y="170.800" font-size="14" fill="#000" textLength="80" lengthAdjust="spacingAndGlyphs">MANU E ALE</text><path d="M1629,268h146.600a3,3 0 0 1 3,3v12a3,3 0 0 1 -3,3h-146.600z" fill="#fff" filter="url(#sh)"/><text x="1719" y="282" font-size="14" fill="#000" textLength="59" lengthAdjust="spacingAndGlyphs">ALBERTO</text><rect x="1335.700" y="682.200" width="141.300" height="17.600" rx="3" fill="#fff" filter="url(#sh)"/><text x="1390.300" y="696" font-size="14" fill="#000" textLength="86" lengthAdjust="spacingAndGlyphs">PIERANTONIO</text><rect x="1336.500" y="686" width="1.200" height="10" fill="#000"/><defs><filter id="cs" x="-10%" y="-20%" width="120%" height="150%"><feDropShadow dx="0" dy="1" stdDeviation="1.600" flood-color="#000" flood-opacity=".3"/></filter></defs><rect x="1194" y="139" width="150" height="36" rx="2" fill="#fff" filter="url(#cs)"/><rect x="1255" y="139" width="1" height="36" fill="#e6e6e6"/><text x="1209.400" y="162.300" font-size="16.500" font-weight="700" fill="#000" textLength="31.400" lengthAdjust="spacingAndGlyphs">Map</text><text x="1271.400" y="162.300" font-size="16.500" fill="#565656" textLength="57.600" lengthAdjust="spacingAndGlyphs">Satellite</text><rect x="1860" y="139" width="36" height="36" rx="2" fill="#fff" filter="url(#cs)"/><path d="M1871.500,154.500v-5h5M1880,149.500h5v5M1885,159.500v5h-5M1876.500,164.500h-5v-5" fill="none" stroke="#666" stroke-width="1.900"/><circle cx="1878" cy="669" r="18" fill="#fff" filter="url(#cs)"/><path d="M1874.300,663l3.600,-3.600 3.600,3.600M1874.300,675.200l3.600,3.600 3.600,-3.600M1871.600,665.500l-3.600,3.600 3.600,3.600M1884.200,665.500l3.600,3.600 -3.600,3.600" fill="none" stroke="#666" stroke-width="1.900"/><rect x="1860" y="716" width="36" height="36" rx="2" fill="#fff" filter="url(#cs)"/><circle cx="1877.500" cy="725.200" r="4.500" fill="#fbbc2a" stroke="#e0a11a" stroke-width=".5"/><path d="M1873.600,731q3.900,-1.600 7.800,0l3,8.200-1.500,.6-2.200,-5v10.500h-6.400v-10.500l-2.200,5-1.500,-.6z" fill="#fbbc2a"/><path d="M1875.200,730.600l2.300,4.400 2.300,-4.400z" fill="#e8833a"/></svg>
<div style="left:1900px;top:114px;width:2px;height:589px;background:#858585;"></div>
<div style="left:1905px;top:130px;width:10px;height:710px;background:#fff;"></div>
<div style="left:1900px;top:114px;width:2px;height:589px;background:#858585;"></div>
<div style="left:1911px;top:220px;width:4px;height:105px;background:#eeeeee;border-radius:3px 0 0 3px;"></div>
<svg style="left:1910px;top:185px" width="5" height="14" viewBox="0 0 5 14"><path d="M5 .5C2.500 2 1.500 4.500 1.500 7s1 5 3.500 6.500" fill="none" stroke="#333" stroke-width="1.600"/></svg>
<div style="left:1911px;top:824px;width:2.6px;height:20px;background:#dc3545;border-radius:2px 0 0 0;"></div>
<div style="left:1911.2px;top:327px;width:2.6px;height:100px;background:#17a2b8;border-radius:2.500px 0 0 2.500px;"></div>
<div style="left:1911.2px;top:433px;width:2.6px;height:91px;background:#17a2b8;border-radius:2.500px 0 0 2.500px;"></div>
<div style="left:1911.2px;top:530px;width:2.6px;height:93px;background:#17a2b8;border-radius:2.500px 0 0 2.500px;"></div>
<div style="left:1911.2px;top:629px;width:2.6px;height:91px;background:#17a2b8;border-radius:2.500px 0 0 2.500px;"></div>
<div style="left:1911.2px;top:726.6px;width:2.6px;height:92.0px;background:#17a2b8;border-radius:2.500px 0 0 2.500px;"></div>
<div style="left:174px;top:40px;width:1737px;height:14px;background:transparent;box-shadow:0 2px 9px 1px rgba(0,0,0,.34);"></div>
<div style="left:0px;top:0px;width:1911px;height:53px;background:#f8f9fa;"></div>
<div style="left:0px;top:53px;width:1911px;height:1px;background:#fcfcfd;"></div>
<div style="left:0px;top:54px;width:178px;height:1px;background:#babcbb;"></div>
<div style="left:0px;top:55px;width:178px;height:1px;background:#efefef;"></div>
<div style="left:178px;top:54px;width:1733px;height:1px;background:rgba(0,0,0,.10);"></div>
<div style="left:1911px;top:0px;width:4px;height:61px;background:#ececec;"></div>
<div style="left:1911px;top:61px;width:4px;height:42px;background:#f7f7f7;"></div>
<span class="t" style="left:17.70px;top:16.39px;font-size:20.5px;color:#111;letter-spacing:1.391px;-webkit-text-stroke:.7px #111;">3Connect</span>
<span class="t" style="left:117.50px;top:24.43px;font-size:11px;color:#111;transform:scaleX(1.1445);-webkit-text-stroke:.4px #111;">.it</span>
<div style="left:146px;top:13px;width:73px;height:28px;background:#007bff;border-radius:3px;"></div>
<svg style="left:153.500px;top:20.500px" width="13" height="13" viewBox="0 0 13 13"><rect x=".7" y=".7" width="10.400" height="11.600" rx="1.500" fill="none" stroke="#fff" stroke-width="1.400"/><path fill="#fff" d="M5.900 3.200a1.700 1.700 0 1 1 0 3.400 1.700 1.700 0 0 1 0-3.400zM2.900 9.800c0-1.700 1.300-2.700 3-2.700s3 1 3 2.700zM11.800 2.500h1.200v2h-1.200zM11.800 5.500h1.200v2h-1.200zM11.800 8.500h1.200v2h-1.200z"/></svg>
<span class="t" style="left:170.20px;top:20.71px;font-size:13.5px;color:#fff;transform:scaleX(0.8768);">Rubrica</span>
<div style="left:224px;top:13px;width:62px;height:28px;background:#007bff;border-radius:3px;"></div>
<svg style="left:232px;top:22.300px" width="12" height="10.200" viewBox="64 256 1664 1408"><path fill="#fff" d="M704 1536q0 52-38 90t-90 38-90-38-38-90 38-90 90-38 90 38 38 90zm896 0q0 52-38 90t-90 38-90-38-38-90 38-90 90-38 90 38 38 90zm128-1088v512q0 24-16.500 42.500t-40.500 21.500l-1044 122q13 60 13 70 0 16-24 64h920q26 0 45 19t19 45-19 45-45 19h-1024q-26 0-45-19t-19-45q0-11 8-31.500t16-36 21.500-40 15.500-29.500l-177-823h-204q-26 0-45-19t-19-45 19-45 45-19h256q16 0 28.500 6.500t19.500 15.500 13 24.500 8 26 5.500 29.500 4.500 26h1201q26 0 45 19t19 45z"/></svg>
<span class="t" style="left:247.00px;top:20.71px;font-size:13.5px;color:#fff;transform:scaleX(0.8049);">Cassa</span>
<div style="left:291px;top:13px;width:76px;height:28px;background:#17a2b8;border-radius:3px;"></div>
<svg style="left:298px;top:20px" width="17" height="15" viewBox="0 0 17 15"><polygon points="8.40,1.00 12.10,3.30 12.10,6.90 8.40,8.80 4.70,6.90 4.70,3.30" fill="#fff"/><path d="M4.70,3.30L8.40,5.20L12.10,3.30M8.40,5.20V8.80" fill="none" stroke="#17a2b8" stroke-width=".9"/><polygon points="4.30,6.80 8.00,9.10 8.00,12.70 4.30,14.60 0.60,12.70 0.60,9.10" fill="#fff"/><path d="M0.60,9.10L4.30,11.00L8.00,9.10M4.30,11.00V14.60" fill="none" stroke="#17a2b8" stroke-width=".9"/><polygon points="12.50,6.80 16.20,9.10 16.20,12.70 12.50,14.60 8.80,12.70 8.80,9.10" fill="#fff"/><path d="M8.80,9.10L12.50,11.00L16.20,9.10M12.50,11.00V14.60" fill="none" stroke="#17a2b8" stroke-width=".9"/></svg>
<span class="t" style="left:319.00px;top:20.71px;font-size:13.5px;color:#fff;transform:scaleX(0.8966);">Apps</span>
<svg style="left:353px;top:25.500px" width="7" height="4" viewBox="0 0 7 4"><path fill="#fff" d="M0 0h6.400L3.200 3.600z"/></svg>
<span class="t" style="left:1396.30px;top:20.17px;font-size:14.4px;color:#aeafb0;transform:scaleX(0.9261);">SUPER-ADMIN</span>
<svg style="left:1504px;top:21px" width="11" height="12" viewBox="0 0 13 14"><path fill="#808182" d="M6.500 0c1.800 0 3 1.400 3 3.200S8.300 6.600 6.500 6.600s-3-1.600-3-3.400S4.700 0 6.500 0zM3.400 6.800c.8.700 1.900 1.100 3.100 1.100s2.300-.4 3.100-1.100c1.900.5 3.200 2 3.200 4.500 0 1.700-1 2.700-2.400 2.700H2.600C1.200 14 .2 13 .2 11.300c0-2.500 1.300-4 3.200-4.500z"/></svg>
<span class="t" style="left:1519.30px;top:20.17px;font-size:14.4px;color:#808182;transform:scaleX(0.9826);">DM</span>
<svg style="left:1549px;top:25.500px" width="8" height="4" viewBox="0 0 8 4"><path fill="#808182" d="M0 0h7.600L3.800 4z"/></svg>
<svg style="left:1571px;top:20px" width="15" height="13" viewBox="0 0 15 13"><path fill="#808182" d="M5 0h5c.6 0 1 .4 1 1v1.500h2.800c.7 0 1.200.5 1.200 1.200V6H0V3.700c0-.7.500-1.200 1.200-1.200H4V1c0-.6.400-1 1-1zm.5 1.300v1.200h4V1.300zM0 7h5.800v1.300h3.400V7H15v4.800c0 .7-.5 1.200-1.200 1.200H1.200C.5 13 0 12.500 0 11.800z"/></svg>
<div style="left:1588px;top:15px;width:69.6px;height:21.6px;background:#fff;"></div>
<svg style="left:1664px;top:25.500px" width="8" height="4" viewBox="0 0 8 4"><path fill="#808182" d="M0 0h7.600L3.800 4z"/></svg>
<svg style="left:1685.500px;top:20.500px" width="13" height="13" viewBox="0 0 13 13"><circle cx="6.500" cy="6.500" r="6.500" fill="#808182"/><path fill="#f8f9fa" d="M4.100 4.700c0-1.400 1.100-2.200 2.500-2.200s2.500.8 2.500 2.100c0 1.700-1.900 1.800-1.900 3.200H5.800c0-1.900 1.700-2 1.700-3.100 0-.5-.4-.8-.9-.8-.6 0-1 .3-1 .9zM5.700 8.700h1.600v1.600H5.700z"/></svg>
<span class="t" style="left:1703.60px;top:20.17px;font-size:14.4px;color:#808182;transform:scaleX(0.9592);">Help</span>
<svg style="left:1747px;top:18px" width="14" height="17" viewBox="0 0 14 17"><path fill="none" stroke="#808182" stroke-width="1.300" d="M7 1.200v1.100M7 2.300c2.500 0 4.200 1.900 4.200 4.700 0 2.900 1 4.400 2 5.300H.8c1-.9 2-2.400 2-5.300 0-2.800 1.700-4.700 4.200-4.700zM5.400 13.600c0 .9.700 1.600 1.600 1.600s1.600-.7 1.600-1.600"/></svg>
<div style="left:1757px;top:31px;width:27px;height:12px;background:#dc3545;border-radius:2.500px;"></div>
<span class="t" style="left:1761.00px;top:32.70px;font-size:8.8px;color:#fff;transform:scaleX(0.9705);">5440</span>
<div style="left:1788px;top:31px;width:23px;height:12px;background:#ffc107;border-radius:2.500px;"></div>
<span class="t" style="left:1792.75px;top:32.70px;font-size:8.8px;transform:scaleX(0.9191);">123</span>
<svg style="left:1828px;top:20px" width="17" height="14" viewBox="0 0 17 14"><path fill="#808182" d="M10.500 0c1.500 0 2.600 1.200 2.600 2.800 0 1-.4 1.900-1 2.500 1.800.5 3.400 1.700 3.400 3.700H12c-.5-1.600-1.700-2.400-3-2.800.5-.8.800-1.700.8-2.700 0-1-.3-2-.9-2.700C9.400.3 9.900 0 10.500 0zM6 1.400c1.600 0 2.800 1.300 2.800 3.100S7.600 7.900 6 7.900 3.200 6.300 3.200 4.500 4.400 1.400 6 1.400zM3.400 8c.7.600 1.600 1 2.600 1s1.900-.4 2.600-1c1.700.5 2.900 1.800 2.900 4 0 1.200-.8 2-2 2h-7c-1.200 0-2-.8-2-2 0-2.200 1.200-3.500 2.900-4z"/></svg>
<svg style="left:1857px;top:20.500px" width="13" height="13" viewBox="0 0 13 13"><path fill="#808182" fill-rule="evenodd" d="M5.400 0h2.200l.3 1.700 1.200.5 1.400-1 1.600 1.600-1 1.400.5 1.200 1.700.3v2.200l-1.700.3-.5 1.200 1 1.400-1.600 1.600-1.400-1-1.200.5-.3 1.700H5.400l-.3-1.700-1.200-.5-1.400 1L.9 10.800l1-1.400-.5-1.200L-.3 7.900V5.700l1.700-.3.5-1.200-1-1.400L2.500 1.200l1.400 1 1.200-.5zM6.500 4.200a2.300 2.300 0 1 0 0 4.600 2.300 2.300 0 0 0 0-4.600z"/></svg>
<svg style="left:1883.500px;top:20px" width="13" height="14" viewBox="0 0 13 14"><path fill="none" stroke="#808182" stroke-width="1.800" stroke-linecap="round" d="M6.500 1v5.500M3.300 3.200a5.200 5.200 0 1 0 6.400 0"/></svg>
</body></html>
